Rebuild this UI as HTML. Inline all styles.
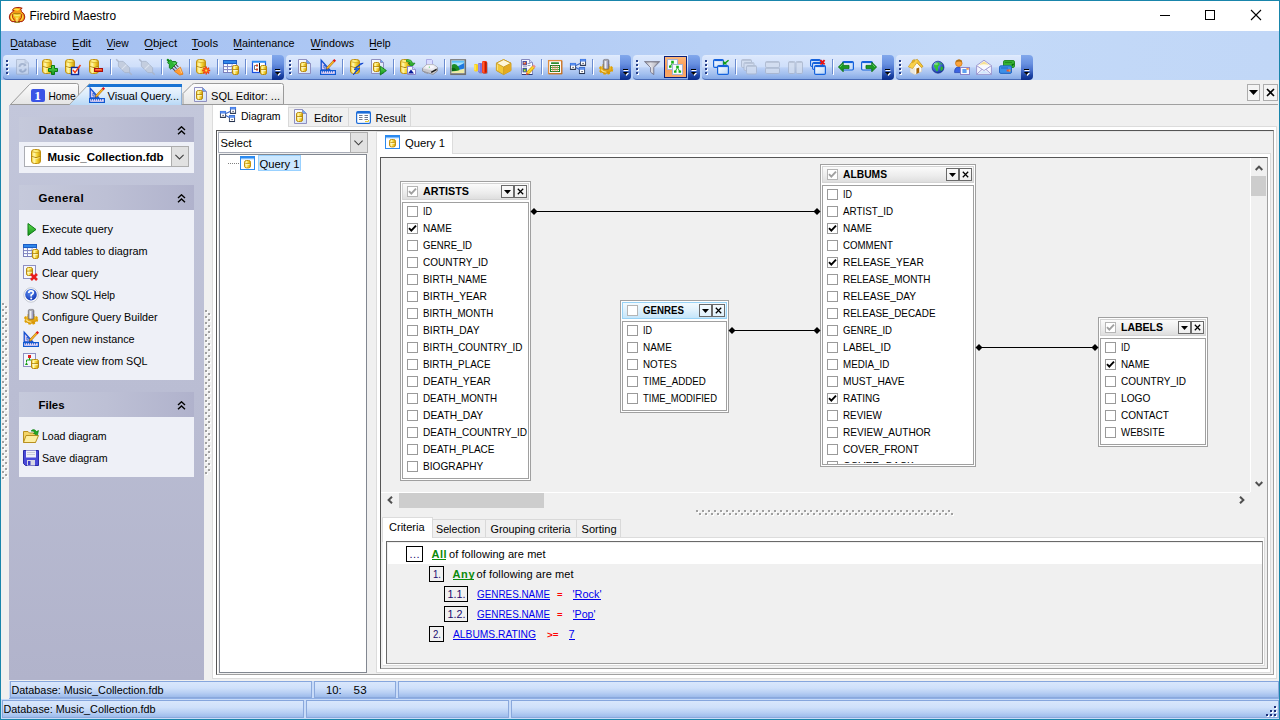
<!DOCTYPE html>
<html><head><meta charset="utf-8"><title>Firebird Maestro</title>
<style>
html,body{margin:0;padding:0;background:#f0f0f0;overflow:hidden}
#w{position:relative;width:1280px;height:720px;overflow:hidden;font-family:"Liberation Sans",sans-serif}
#w div,#w svg{position:absolute}
#tx{left:0;top:0;font-family:"Liberation Sans",sans-serif;font-size:11px}
#tx .t{font-family:"Liberation Sans",sans-serif}
</style></head><body>
<div id="w">
<svg width="0" height="0" style="left:0;top:0"><defs>
<linearGradient id="gcy" x1="0" y1="0" x2="1" y2="0"><stop offset="0" stop-color="#f3c81c"/><stop offset="0.28" stop-color="#fff9b8"/><stop offset="0.6" stop-color="#f7d733"/><stop offset="1" stop-color="#c8960c"/></linearGradient>
<linearGradient id="gpg" x1="0" y1="0" x2="1" y2="1"><stop offset="0" stop-color="#ffffff"/><stop offset="1" stop-color="#cfe0f6"/></linearGradient>
<linearGradient id="ggr" x1="0" y1="0" x2="0" y2="1"><stop offset="0" stop-color="#5fdc4f"/><stop offset="1" stop-color="#12921a"/></linearGradient>
<linearGradient id="gwin" x1="0" y1="0" x2="1" y2="1"><stop offset="0" stop-color="#ffffff"/><stop offset="1" stop-color="#b7d4f7"/></linearGradient>
<linearGradient id="ggear" x1="0" y1="0" x2="0" y2="1"><stop offset="0" stop-color="#ffd23c"/><stop offset="1" stop-color="#d08a00"/></linearGradient>
<linearGradient id="gmet" x1="0" y1="0" x2="1" y2="0"><stop offset="0" stop-color="#8a8a92"/><stop offset="0.4" stop-color="#f0f0f6"/><stop offset="1" stop-color="#6e6e78"/></linearGradient>
<radialGradient id="gglobe" cx="0.35" cy="0.3" r="0.8"><stop offset="0" stop-color="#6fa8ff"/><stop offset="1" stop-color="#0a2a9a"/></radialGradient>
<radialGradient id="ghelp" cx="0.4" cy="0.3" r="0.8"><stop offset="0" stop-color="#5d8df0"/><stop offset="1" stop-color="#0a2fb0"/></radialGradient>
<symbol id="i_db_small" viewBox="0 0 16 16" overflow="visible"><rect x="1.5" y="0.5" width="9" height="14" rx="3" ry="2.4000000000000004" fill="url(#gcy)" stroke="#c09010" stroke-width="1"/><path d="M2 2.6Q6.0 4.85 10 2.6Q6.0 -0.6 2 2.6Z" fill="#fdee7c" opacity="0.9"/><path d="M1.8 2.6Q6.0 4.85 10.2 2.6" stroke="#c89a14" stroke-width="0.8" fill="none" opacity="0.8"/><path d="M1.6 7.5Q6.0 9.75 10.4 7.5" stroke="#a87c08" stroke-width="1" fill="none" opacity="0.9"/><path d="M2.2 8.5Q6.0 10.75 9.8 8.5" stroke="#fff6b0" stroke-width="0.8" fill="none" opacity="0.8"/></symbol><symbol id="i_db_add" viewBox="0 0 16 16" overflow="visible"><rect x="0.5" y="0.5" width="9" height="14" rx="3" ry="2.4000000000000004" fill="url(#gcy)" stroke="#c09010" stroke-width="1"/><path d="M1 2.6Q5.0 4.85 9 2.6Q5.0 -0.6 1 2.6Z" fill="#fdee7c" opacity="0.9"/><path d="M0.8 2.6Q5.0 4.85 9.2 2.6" stroke="#c89a14" stroke-width="0.8" fill="none" opacity="0.8"/><path d="M0.6 7.5Q5.0 9.75 9.4 7.5" stroke="#a87c08" stroke-width="1" fill="none" opacity="0.9"/><path d="M1.2 8.5Q5.0 10.75 8.8 8.5" stroke="#fff6b0" stroke-width="0.8" fill="none" opacity="0.8"/><path d="M9.5 6.5h3v3h3v3h-3v3h-3v-3h-3v-3h3z" fill="url(#ggr)" stroke="#0c7a12" stroke-width="1"/></symbol><symbol id="i_db_check" viewBox="0 0 16 16" overflow="visible"><rect x="0.5" y="0.5" width="9" height="14" rx="3" ry="2.4000000000000004" fill="url(#gcy)" stroke="#c09010" stroke-width="1"/><path d="M1 2.6Q5.0 4.85 9 2.6Q5.0 -0.6 1 2.6Z" fill="#fdee7c" opacity="0.9"/><path d="M0.8 2.6Q5.0 4.85 9.2 2.6" stroke="#c89a14" stroke-width="0.8" fill="none" opacity="0.8"/><path d="M0.6 7.5Q5.0 9.75 9.4 7.5" stroke="#a87c08" stroke-width="1" fill="none" opacity="0.9"/><path d="M1.2 8.5Q5.0 10.75 8.8 8.5" stroke="#fff6b0" stroke-width="0.8" fill="none" opacity="0.8"/><rect x="6.5" y="8.5" width="7" height="7" fill="#fff" stroke="#0b2c9c" stroke-width="1.4"/><path d="M8 11L10 13.6L15.5 6" stroke="#f03a14" stroke-width="1.5" fill="none"/></symbol><symbol id="i_db_del" viewBox="0 0 16 16" overflow="visible"><rect x="0.5" y="0.5" width="9" height="14" rx="3" ry="2.4000000000000004" fill="url(#gcy)" stroke="#c09010" stroke-width="1"/><path d="M1 2.6Q5.0 4.85 9 2.6Q5.0 -0.6 1 2.6Z" fill="#fdee7c" opacity="0.9"/><path d="M0.8 2.6Q5.0 4.85 9.2 2.6" stroke="#c89a14" stroke-width="0.8" fill="none" opacity="0.8"/><path d="M0.6 7.5Q5.0 9.75 9.4 7.5" stroke="#a87c08" stroke-width="1" fill="none" opacity="0.9"/><path d="M1.2 8.5Q5.0 10.75 8.8 8.5" stroke="#fff6b0" stroke-width="0.8" fill="none" opacity="0.8"/><rect x="5.5" y="9.5" width="8" height="3" fill="#f2481c" stroke="#a80c0c" stroke-width="1"/><path d="M6.5 10.5H12.5" stroke="#ff8a50" stroke-width="0.8"/></symbol><symbol id="i_db_gear" viewBox="0 0 16 16" overflow="visible"><rect x="0.5" y="0.5" width="9" height="14" rx="3" ry="2.4000000000000004" fill="url(#gcy)" stroke="#c09010" stroke-width="1"/><path d="M1 2.6Q5.0 4.85 9 2.6Q5.0 -0.6 1 2.6Z" fill="#fdee7c" opacity="0.9"/><path d="M0.8 2.6Q5.0 4.85 9.2 2.6" stroke="#c89a14" stroke-width="0.8" fill="none" opacity="0.8"/><path d="M0.6 7.5Q5.0 9.75 9.4 7.5" stroke="#a87c08" stroke-width="1" fill="none" opacity="0.9"/><path d="M1.2 8.5Q5.0 10.75 8.8 8.5" stroke="#fff6b0" stroke-width="0.8" fill="none" opacity="0.8"/><g transform="translate(10.2 11.6)"><path d="M0 -4V4M-4 0H4M-2.8 -2.8L2.8 2.8M-2.8 2.8L2.8 -2.8" stroke="#f43a0c" stroke-width="1.5"/><circle r="2.5" fill="#f85818"/><circle r="1.1" fill="#ffe24a"/></g></symbol><symbol id="i_db_bolt" viewBox="0 0 16 16" overflow="visible"><rect x="2.5" y="0.5" width="9" height="14" rx="3" ry="2.4000000000000004" fill="url(#gcy)" stroke="#c09010" stroke-width="1"/><path d="M3 2.6Q7.0 4.85 11 2.6Q7.0 -0.6 3 2.6Z" fill="#fdee7c" opacity="0.9"/><path d="M2.8 2.6Q7.0 4.85 11.2 2.6" stroke="#c89a14" stroke-width="0.8" fill="none" opacity="0.8"/><path d="M2.6 7.5Q7.0 9.75 11.4 7.5" stroke="#a87c08" stroke-width="1" fill="none" opacity="0.9"/><path d="M3.2 8.5Q7.0 10.75 10.8 8.5" stroke="#fff6b0" stroke-width="0.8" fill="none" opacity="0.8"/><path d="M15.2 4.2L7.6 8.6L11.6 9.4L5.2 16L8.6 10.8L6 10.4L12.6 4.6Z" fill="#2a78f4" stroke="#0a3cc8" stroke-width="0.8" stroke-linejoin="round"/></symbol><symbol id="i_db_export" viewBox="0 0 16 16" overflow="visible"><rect x="0.5" y="0.5" width="9" height="14" rx="3" ry="2.4000000000000004" fill="url(#gcy)" stroke="#c09010" stroke-width="1"/><path d="M1 2.6Q5.0 4.85 9 2.6Q5.0 -0.6 1 2.6Z" fill="#fdee7c" opacity="0.9"/><path d="M0.8 2.6Q5.0 4.85 9.2 2.6" stroke="#c89a14" stroke-width="0.8" fill="none" opacity="0.8"/><path d="M0.6 7.5Q5.0 9.75 9.4 7.5" stroke="#a87c08" stroke-width="1" fill="none" opacity="0.9"/><path d="M1.2 8.5Q5.0 10.75 8.8 8.5" stroke="#fff6b0" stroke-width="0.8" fill="none" opacity="0.8"/><path d="M6.5 0.8Q12 0.2 12.4 4.2H15L11.6 8L8.2 4.2H10.4Q10 2.6 6.5 2.6Z" fill="url(#ggr)" stroke="#0c7a12" stroke-width="0.7"/><path d="M7.5 7.5H12.5L15.5 10.5V15.5H7.5Z" fill="#f6f8ff" stroke="#8a84c8"/><path d="M12.5 7.5V10.5H15.5" fill="#cfe0ff" stroke="#8a84c8" stroke-width="0.8"/><path d="M11 10.6L14 14.4H8Z" fill="#0a1c9c"/></symbol><symbol id="i_tb_refresh" viewBox="0 0 16 16" overflow="visible"><g opacity="0.62"><path d="M2.5 0.5H11L14.5 4V15.2H2.5Z" fill="#d0daea" stroke="#9eacc4"/><path d="M11 0.5V4H14.5" fill="#bcc8dc" stroke="#9eacc4" stroke-width="0.8"/><path d="M5.4 8A3.4 3.4 0 0 1 11.6 6.4M11.8 9.6A3.4 3.4 0 0 1 5.6 11.2" stroke="#8c9cb8" stroke-width="1.9" fill="none"/><path d="M10 4.4L12.6 6.8L9.4 7.6ZM7.2 13.2L4.6 10.8L7.8 10Z" fill="#8c9cb8"/></g></symbol><symbol id="i_conn_gray" viewBox="0 0 16 16" overflow="visible"><g transform="rotate(45 8 8)" opacity="0.9"><rect x="-3" y="7.3" width="22" height="1.5" fill="#a9b4c9"/><path d="M1 7L3.5 4.6H12.5L15 7V9L12.5 11.4H3.5L1 9Z" fill="#c3ccdc" stroke="#a7b2c8" stroke-width="0.8"/><path d="M8 4.6V11.4" stroke="#dfe5ef" stroke-width="1"/></g></symbol><symbol id="i_plug" viewBox="0 0 16 16" overflow="visible"><g transform="rotate(45 8 8)"><rect x="-3.2" y="7" width="3.4" height="2.2" rx="1" fill="#0f8a18"/><path d="M-0.3 6L2.2 6L4.6 3.6H6.6V12.6H4.6L2.2 10.2H-0.3Z" fill="#2cb534" stroke="#0a7412" stroke-width="0.8"/><path d="M3 6.5L5 4.6H6V6.5Z" fill="#7ee07e" opacity="0.7"/><path d="M6.8 5.6H10.4M6.8 8.1H10.4M6.8 10.6H10.4" stroke="#4a3c3c" stroke-width="1"/></g><path d="M7.6 12.4L13.4 8.2L16 15.2L12.8 16Z" fill="#ff9c34" stroke="#e87a0c" stroke-width="0.8"/><path d="M11.5 10.5L13 9.6L14.6 14" stroke="#ffd090" stroke-width="0.9" fill="none"/></symbol><symbol id="i_table_db" viewBox="0 0 16 16" overflow="visible"><rect x="0.5" y="1.5" width="13" height="12" fill="#fff" stroke="#7c80bc"/><rect x="0.5" y="1.5" width="13" height="3" fill="#2f86ea" stroke="#1c5cc4"/><path d="M1 7.5H13M1 10.5H13M4.5 5V13M9 5V13" stroke="#8a8cc4" stroke-width="1"/><path d="M1.5 5.5H4M5.5 5.5H8.5M1.5 8.5H4M5.5 8.5H8.5M1.5 11.5H4M5.5 11.5H8.5" stroke="#e4f0ff" stroke-width="1.2"/><rect x="9.5" y="6.5" width="6" height="9" rx="2" ry="1.6" fill="url(#gcy)" stroke="#b8880c" stroke-width="1"/><path d="M10.6 7.5H14.4" stroke="#fdf08c" stroke-width="0.9" opacity="0.9"/><path d="M10 10.7H15" stroke="#a87c08" stroke-width="0.9"/><path d="M10.2 11.7H14.8" stroke="#fffad8" stroke-width="1"/></symbol><symbol id="i_diag_db" viewBox="0 0 16 16" overflow="visible"><rect x="0.5" y="2.5" width="13" height="11" fill="#fff" stroke="#1c50e0" stroke-width="1.2"/><path d="M0 2.8H14" stroke="#2b8cf4" stroke-width="1.8"/><path d="M7.5 4V13" stroke="#111" stroke-width="1"/><path d="M4.5 6.5H2.5V10.5H4.5" stroke="#666" stroke-width="0.9" fill="none"/><rect x="4" y="5.5" width="2" height="2" fill="#d8401c"/><rect x="4" y="9.5" width="2" height="2" fill="#d8401c"/><rect x="8.5" y="6.5" width="6" height="9" rx="2" ry="1.6" fill="url(#gcy)" stroke="#b8880c" stroke-width="1"/><path d="M9.6 7.5H13.4" stroke="#fdf08c" stroke-width="0.9" opacity="0.9"/><path d="M9 10.7H14" stroke="#a87c08" stroke-width="0.9"/><path d="M9.2 11.7H13.8" stroke="#fffad8" stroke-width="1"/></symbol><symbol id="i_view_db" viewBox="0 0 16 16" overflow="visible"><rect x="0.5" y="0.5" width="12" height="13" fill="#f4f6ff" stroke="#8f8fc0"/><rect x="5" y="2" width="3" height="3" fill="#e02020"/><path d="M6.5 5V7M3.5 9V7H9.5V9" stroke="#18a018" stroke-width="1" fill="none"/><path d="M2 12L3.5 9L5 12Z" fill="#18a018"/><rect x="8.5" y="6.5" width="7" height="9" rx="2" ry="1.6" fill="url(#gcy)" stroke="#b8880c" stroke-width="1"/><path d="M9.6 7.5H14.4" stroke="#fdf08c" stroke-width="0.9" opacity="0.9"/><path d="M9 10.7H15" stroke="#a87c08" stroke-width="0.9"/><path d="M9.2 11.7H14.8" stroke="#fffad8" stroke-width="1"/></symbol><symbol id="i_clear_q" viewBox="0 0 16 16" overflow="visible"><rect x="0.5" y="0.5" width="12" height="13" fill="#f4f6ff" stroke="#8f8fc0"/><rect x="3.5" y="2.5" width="6" height="8" rx="2" ry="1.6" fill="url(#gcy)" stroke="#b8880c" stroke-width="1"/><path d="M4.6 3.5H8.4" stroke="#fdf08c" stroke-width="0.9" opacity="0.9"/><path d="M4 6.2H9" stroke="#a87c08" stroke-width="0.9"/><path d="M4.2 7.2H8.8" stroke="#fffad8" stroke-width="1"/><path d="M8 9L14 15M14 9L8 15" stroke="#e81c1c" stroke-width="2.6"/></symbol><symbol id="i_sqldoc" viewBox="0 0 16 16" overflow="visible"><path d="M1.5 0.5H9.5L13.5 4.5V14.5H1.5Z" fill="url(#gpg)" stroke="#8f8fc0" stroke-width="1"/><path d="M9.5 0.5V4.5H13.5" fill="#6aa8f2" stroke="#8f8fc0" stroke-width="1"/><rect x="3.5" y="3.5" width="6" height="9" rx="2" ry="1.6" fill="url(#gcy)" stroke="#b8880c" stroke-width="1"/><path d="M4.6 4.5H8.4" stroke="#fdf08c" stroke-width="0.9" opacity="0.9"/><path d="M4 7.7H9" stroke="#a87c08" stroke-width="0.9"/><path d="M4.2 8.7H8.8" stroke="#fffad8" stroke-width="1"/></symbol><symbol id="i_doc_play" viewBox="0 0 16 16" overflow="visible"><path d="M0.5 0.5H9.5L12.5 3.5V14.5H0.5Z" fill="url(#gpg)" stroke="#8f8fc0" stroke-width="1"/><path d="M9.5 0.5V3.5H12.5" fill="#6aa8f2" stroke="#8f8fc0" stroke-width="1"/><rect x="2.5" y="3.5" width="6" height="9" rx="2" ry="1.6" fill="url(#gcy)" stroke="#b8880c" stroke-width="1"/><path d="M3.6 4.5H7.4" stroke="#fdf08c" stroke-width="0.9" opacity="0.9"/><path d="M3 7.7H8" stroke="#a87c08" stroke-width="0.9"/><path d="M3.2 8.7H7.8" stroke="#fffad8" stroke-width="1"/><path d="M9.3 7.2L15.4 11.6L9.3 16Z" fill="url(#ggr)" stroke="#0c7a12" stroke-width="0.9"/></symbol><symbol id="i_ruler" viewBox="0 0 16 16" overflow="visible"><path d="M1.2 11V1.2L10 11Z" fill="#d8c8f0" stroke="#1450d0" stroke-width="1.3"/><path d="M4 9V6L6.8 9Z" fill="#e8f0ff" stroke="#1a50c8" stroke-width="0.8"/><rect x="0.6" y="11.6" width="14.8" height="3.8" fill="#ecd8f4" stroke="#1058d0" stroke-width="1.2"/><path d="M2.5 12V13.6M4.5 12V13.6M6.5 12V13.6M8.5 12V13.6M10.5 12V13.6M12.5 12V13.6" stroke="#1058d0" stroke-width="0.8"/><path d="M7 9.5L14 2" stroke="#a86410" stroke-width="2.4"/><path d="M7 9.5L14 2" stroke="#f8b828" stroke-width="1.4"/><path d="M13.6 2.4L15.2 0.8" stroke="#e01818" stroke-width="2.4"/><path d="M6 10.8L6.6 9L7.8 10.2Z" fill="#333"/></symbol><symbol id="i_printer" viewBox="0 0 16 16" overflow="visible"><path d="M4.5 0.5H9.5L10.5 1.5V6H4.5Z" fill="#d9dcff" stroke="#a4a4e0" stroke-width="0.9"/><path d="M0.6 9.2L5 5.6H11.4L15.4 8.4V12L11 15.4L0.6 12.2Z" fill="#c9c9cd" stroke="#85858c" stroke-width="0.8"/><path d="M0.6 9.2L5 5.6H11.4L15.4 8.4L10.6 11.6Z" fill="#e9e9ee"/><path d="M5 6.4H10.6L12.6 8L9.6 9.8L3 8Z" fill="#fafaff" opacity="0.8"/><path d="M9.2 13.4L14.6 10.4" stroke="#1a1a1a" stroke-width="1.5"/><circle cx="7.3" cy="8.1" r="0.6" fill="#30c040"/><path d="M2 12.6L6 13.8V15L2 13.8Z" fill="#9a9aa2"/></symbol><symbol id="i_picture" viewBox="0 0 16 16" overflow="visible"><rect x="0.6" y="0.6" width="15" height="15" fill="#b4b4b4" stroke="#7c7c7c" stroke-width="1"/><path d="M15.2 1V15.2H1" stroke="#6a6a6a" stroke-width="1.2" fill="none"/><rect x="1.8" y="1.8" width="12.4" height="12.2" fill="#a8e4fc"/><path d="M1.8 1.8H14.2V3.6H1.8Z" fill="#5cc0f8"/><path d="M7.5 7.5L14.2 4V10.5H7.5Z" fill="#1e78e0"/><path d="M1.8 6Q5 3.6 8.2 7.4Q10.4 10.6 9 12.4L1.8 12.6Z" fill="#1c8c24"/><path d="M1.8 9Q4.5 8 6.5 11L1.8 12.6Z" fill="#0c6414"/><path d="M1.8 12.4Q7 12.4 14.2 9.4V14H1.8Z" fill="#f0eca4"/></symbol><symbol id="i_chart" viewBox="0 0 16 16" overflow="visible"><rect x="9.8" y="3" width="5" height="12" rx="1.4" fill="#303040" opacity="0.35"/><rect x="6" y="5.2" width="4" height="9.2" rx="1.2" fill="#303040" opacity="0.3"/><rect x="1" y="5" width="4" height="7.4" rx="1.3" fill="#fad21c"/><path d="M2 6V11.4" stroke="#fff48c" stroke-width="1"/><rect x="5" y="4" width="4.2" height="9.6" rx="1.3" fill="#7c74dc"/><path d="M6.1 5V12.6" stroke="#b0aaf0" stroke-width="1"/><rect x="9" y="2" width="5" height="12.4" rx="1.4" fill="#f8340c"/><path d="M12.8 3V13.4" stroke="#b01c04" stroke-width="1.4"/><path d="M10.2 3V13.4" stroke="#ff7a50" stroke-width="0.9"/></symbol><symbol id="i_cube" viewBox="0 0 16 16" overflow="visible"><path d="M7.6 0.6L15 4.2V11.6L7.6 15.6L0.4 11.6V4.2Z" fill="#f2c838" stroke="#c4961c" stroke-width="0.9"/><path d="M7.6 8L15 4.2V11.6L7.6 15.6Z" fill="#e4aa20"/><path d="M7.6 0.6L15 4.2L7.6 8L0.4 4.2Z" fill="#fef6d8" stroke="#c89c20" stroke-width="0.9"/><path d="M7.6 8V15.6" stroke="#c89c20" stroke-width="0.8"/><path d="M1.4 5.6V11.2" stroke="#fbe27c" stroke-width="1"/></symbol><symbol id="i_report" viewBox="0 0 16 16" overflow="visible"><path d="M1.5 0.5H9.5L12.5 3.5V15.5H1.5Z" fill="#f6f8ff" stroke="#8488c0"/><path d="M9.5 0.5V3.5H12.5" fill="#cfdcf8" stroke="#8488c0" stroke-width="0.8"/><path d="M2 15.5H12.5" stroke="#2a3a78" stroke-width="1"/><rect x="3" y="2.5" width="3.4" height="3.4" fill="#e8602c" stroke="#2c3c9c" stroke-width="0.8"/><rect x="3" y="9.5" width="3.4" height="3.4" fill="#4cac3c" stroke="#2c3c9c" stroke-width="0.8"/><path d="M3.6 3.1H5L4.3 4.4Z" fill="#9cd0ff"/><path d="M3.6 12.2L4.8 10.4L5.8 12.2Z" fill="#f4e040"/><path d="M7.6 4.5H10.4M7.6 6.5H10.4M3 7.8H7" stroke="#8a90b0" stroke-width="0.9"/><path d="M7.4 14.2L13.8 7.6" stroke="#c89008" stroke-width="3.4" stroke-linecap="butt"/><path d="M7.4 14.2L13.8 7.6" stroke="#fad428" stroke-width="2.2"/><path d="M5.8 16L6.6 13.2L8.6 15.2Z" fill="#f0502c"/><path d="M13.4 8L14.8 6.6" stroke="#f08c8c" stroke-width="2.8"/></symbol><symbol id="i_gridcal" viewBox="0 0 16 16" overflow="visible"><rect x="1.6" y="1.6" width="13" height="13" fill="#fff" stroke="#e08c3c" stroke-width="1.3"/><path d="M2 14.8H15M14.9 2V15" stroke="#b86820" stroke-width="0.8" fill="none"/><rect x="4" y="3.2" width="8" height="1.7" rx="0.5" fill="#2c8c2c"/><rect x="3.5" y="6.5" width="9" height="6" fill="#fff" stroke="#1c7c24" stroke-width="1"/><path d="M3.5 8.5H12.5M3.5 10.5H12.5" stroke="#2c9c34" stroke-width="0.9"/><path d="M5.8 6.5V12.5M8 6.5V12.5M10.2 6.5V12.5" stroke="#e88c50" stroke-width="0.9"/></symbol><symbol id="i_diagram" viewBox="0 0 16 16" overflow="visible"><path d="M5.8 6.6L10.2 4.4M5.8 8.6L9.4 10.4" stroke="#3c68c8" stroke-width="1.1" fill="none"/><rect x="0.4" y="4.4" width="5.2" height="6.0" fill="#fff" stroke="#2c3c60" stroke-width="0.9"/><rect x="0" y="4" width="6" height="2.5" fill="#3e7ae8"/><path d="M1 5.2H5" stroke="#7ca8f4" stroke-width="0.7"/><path d="M0.3 10.3H5.7" stroke="#26324c" stroke-width="1"/><path d="M2.2 8.4H4" stroke="#445" stroke-width="0.8"/><rect x="10.4" y="0.4" width="5.2" height="6.0" fill="#fff" stroke="#2c3c60" stroke-width="0.9"/><rect x="10" y="0" width="6" height="2.5" fill="#3e7ae8"/><path d="M11 1.2H15" stroke="#7ca8f4" stroke-width="0.7"/><path d="M10.3 6.3H15.7" stroke="#26324c" stroke-width="1"/><path d="M12.2 4.4H14" stroke="#445" stroke-width="0.8"/><rect x="9.4" y="8.6" width="5.2" height="6.0" fill="#fff" stroke="#2c3c60" stroke-width="0.9"/><rect x="9" y="8.2" width="6" height="2.5" fill="#3e7ae8"/><path d="M10 9.399999999999999H14" stroke="#7ca8f4" stroke-width="0.7"/><path d="M9.3 14.5H14.7" stroke="#26324c" stroke-width="1"/><path d="M11.2 12.6H13" stroke="#445" stroke-width="0.8"/></symbol><symbol id="i_gear" viewBox="0 0 16 16" overflow="visible"><ellipse cx="8" cy="10.3" rx="6.1" ry="4.4" fill="none" stroke="#e0a000" stroke-width="2.2" stroke-dasharray="2.3 1.9"/><ellipse cx="8" cy="10.3" rx="5.7" ry="4.1" fill="url(#ggear)" stroke="#d89a00" stroke-width="0.6"/><path d="M3.2 10.6Q5 13.4 8.4 13.2" stroke="#fff0a0" stroke-width="1.3" fill="none" opacity="0.8"/><ellipse cx="8" cy="9.4" rx="3.4" ry="1.5" fill="#b07000" opacity="0.55"/><rect x="5.3" y="0.4" width="5.6" height="9.6" rx="1.6" ry="1.4" fill="url(#gmet)" stroke="#70707a" stroke-width="0.7"/><path d="M6 1.5H10.2" stroke="#a8a8b0" stroke-width="1"/><path d="M9.3 2.5V9" stroke="#a0a0e0" stroke-width="1" opacity="0.7"/></symbol><symbol id="i_funnel" viewBox="0 0 16 16" overflow="visible"><path d="M0.5 2.6H15.7L9.8 8.6V15.6L6.6 13.2V8.6Z" fill="url(#gmet)" stroke="#6a6a80" stroke-width="0.8"/><path d="M1.2 3H15" stroke="#8c8c98" stroke-width="1"/><path d="M2.6 3.8H13.4L8.4 8.2Z" fill="#d4d4dc" opacity="0.6"/></symbol><symbol id="i_viewpair" viewBox="0 0 16 16" overflow="visible"><rect x="1.5" y="0.5" width="10" height="10" fill="#f8faff" stroke="#a8b4d4" stroke-width="1"/><path d="M6.5 3.4L4.2 7.6M6.5 3.4L8.8 7.6" stroke="#12a012" stroke-width="0.9"/><path d="M5.2 1.8h2.6v2.2h-2.6zM3 6.6h2.5v2.2h-2.5zM7.6 6.6h2.5v2.2h-2.5z" fill="#14b014"/><rect x="6.5" y="5.5" width="10" height="10" fill="#f8faff" stroke="#a8b4d4" stroke-width="1"/><path d="M11.5 8.4L9.2 12.6M11.5 8.4L13.8 12.6" stroke="#12a012" stroke-width="0.9"/><path d="M10.2 6.8h2.6v2.2h-2.6zM8 11.6h2.5v2.2h-2.5zM12.6 11.6h2.5v2.2h-2.5z" fill="#14b014"/></symbol><symbol id="i_win_new" viewBox="0 0 16 16" overflow="visible"><rect x="0.6" y="0.6" width="9.8" height="7.8" rx="1.2" fill="url(#gwin)" stroke="#1462dc" stroke-width="1.2"/><path d="M1.2 1.4H9.8" stroke="#1462dc" stroke-width="1.4"/><rect x="4.6" y="6.6" width="10.8" height="8.8" rx="1.2" fill="url(#gwin)" stroke="#1462dc" stroke-width="1.2"/><path d="M5.2 7.4H14.8" stroke="#1462dc" stroke-width="1.4"/><path d="M15.6 1.2L11.4 4.6" stroke="#12a012" stroke-width="1.4"/><path d="M10.2 1.6V5.4H14.4Z" fill="#12a012"/></symbol><symbol id="i_cascade" viewBox="0 0 16 16" overflow="visible"><g opacity="0.8"><rect x="0.5" y="0.5" width="10" height="8" rx="1.3" fill="#d3ddee" stroke="#a9b5cb" stroke-width="1"/><path d="M1 1.3H10" stroke="#b4bfd2" stroke-width="1.4"/><rect x="3.0" y="3.5" width="10" height="8" rx="1.3" fill="#d3ddee" stroke="#a9b5cb" stroke-width="1"/><path d="M3.5 4.3H12.5" stroke="#b4bfd2" stroke-width="1.4"/><rect x="5.5" y="6.5" width="10" height="8.5" rx="1.3" fill="#d3ddee" stroke="#a9b5cb" stroke-width="1"/><path d="M6 7.3H15" stroke="#b4bfd2" stroke-width="1.4"/></g></symbol><symbol id="i_tileh" viewBox="0 0 16 16" overflow="visible"><g opacity="0.8"><rect x="1.5" y="2.5" width="14" height="6" rx="1.3" fill="#d3ddee" stroke="#a9b5cb" stroke-width="1"/><path d="M2 3.3H15" stroke="#b4bfd2" stroke-width="1.4"/><rect x="1.5" y="8.5" width="14" height="6" rx="1.3" fill="#d3ddee" stroke="#a9b5cb" stroke-width="1"/><path d="M2 9.3H15" stroke="#b4bfd2" stroke-width="1.4"/></g></symbol><symbol id="i_tilev" viewBox="0 0 16 16" overflow="visible"><g opacity="0.8"><rect x="1.5" y="2.5" width="6.5" height="12" rx="1.3" fill="#d3ddee" stroke="#a9b5cb" stroke-width="1"/><path d="M2 3.3H7.5" stroke="#b4bfd2" stroke-width="1.4"/><rect x="9.0" y="2.5" width="6.5" height="12" rx="1.3" fill="#d3ddee" stroke="#a9b5cb" stroke-width="1"/><path d="M9.5 3.3H15.0" stroke="#b4bfd2" stroke-width="1.4"/></g></symbol><symbol id="i_win_close" viewBox="0 0 16 16" overflow="visible"><rect x="0.6" y="0.6" width="9.8" height="6.8" rx="1.2" fill="url(#gwin)" stroke="#1462dc" stroke-width="1.2"/><path d="M1.2 1.4H9.8" stroke="#1462dc" stroke-width="1.4"/><rect x="2.6" y="3.6" width="9.8" height="6.8" rx="1.2" fill="url(#gwin)" stroke="#1462dc" stroke-width="1.2"/><path d="M3.2 4.4H11.8" stroke="#1462dc" stroke-width="1.4"/><rect x="4.6" y="6.6" width="10.8" height="8.8" rx="1.2" fill="url(#gwin)" stroke="#1462dc" stroke-width="1.2"/><path d="M5.2 7.4H14.8" stroke="#1462dc" stroke-width="1.4"/><path d="M10.4 1.2L14.6 5.4M14.6 1.2L10.4 5.4" stroke="#ec1010" stroke-width="1.9"/></symbol><symbol id="i_arr_back" viewBox="0 0 16 16" overflow="visible"><rect x="4.6" y="2.6" width="10.8" height="8.4" rx="1.2" fill="url(#gwin)" stroke="#1462dc" stroke-width="1.2"/><path d="M5.2 3.4H14.8" stroke="#1462dc" stroke-width="1.4"/><path d="M0.4 8L5.2 3.2V6.4H11V9.6H5.2V12.8Z" fill="#1a9a22" stroke="#0a6c10" stroke-width="0.8" stroke-linejoin="round"/><path d="M2 8L4.6 5.4" stroke="#6cd86c" stroke-width="0.8"/></symbol><symbol id="i_arr_fwd" viewBox="0 0 16 16" overflow="visible"><rect x="0.6" y="2.6" width="10.8" height="8.4" rx="1.2" fill="url(#gwin)" stroke="#1462dc" stroke-width="1.2"/><path d="M1.2 3.4H10.8" stroke="#1462dc" stroke-width="1.4"/><g transform="translate(16 0) scale(-1 1)"><path d="M0.4 8L5.2 3.2V6.4H11V9.6H5.2V12.8Z" fill="#1a9a22" stroke="#0a6c10" stroke-width="0.8" stroke-linejoin="round"/><path d="M2 8L4.6 5.4" stroke="#6cd86c" stroke-width="0.8"/></g></symbol><symbol id="i_home" viewBox="0 0 16 16" overflow="visible"><path d="M2.4 8.4V13L7 15.6L13.6 12.6V7.6L9 3.6Z" fill="#fbfaf4" stroke="#d0c8b4" stroke-width="0.7"/><path d="M7 15.6V9L2.4 8.4V13Z" fill="#ece8dc"/><path d="M0.4 7.8L4.6 2L9.4 0.4L15 7.4L13.4 8.6L8.8 3.6L4.6 9.4Z" fill="#f6c634" stroke="#c0901c" stroke-width="0.8"/><path d="M4.6 2L9.4 0.4L8.8 3.6L4.6 9.4L0.4 7.8Z" fill="#fbd858" opacity="0.6"/><path d="M8.4 9.6L11.2 8.4V13.6L8.4 14.9Z" fill="#a46408"/><path d="M4.4 1.4L6.4 0.4V2.6L4.4 3.8Z" fill="#e8b428" stroke="#c0901c" stroke-width="0.5"/></symbol><symbol id="i_globe" viewBox="0 0 16 16" overflow="visible"><circle cx="7" cy="8.2" r="6" fill="url(#gglobe)" stroke="#1c2c8c" stroke-width="0.7"/><path d="M3 5.4Q4.8 2.8 7.4 3.2Q9.6 4.2 8.2 6.4Q6.4 7.4 7 9.6Q7.6 11.4 6 12.6Q4.4 11.4 4.4 9.4Q2.6 7.8 3 5.4Z" fill="#34c434"/><path d="M9.8 7.6Q12 7 12.2 9Q11.8 11.6 9.8 12.2Q9 10 9.8 7.6Z" fill="#2cb42c"/><path d="M9 3.4Q10.8 3.8 11.6 5.2L10 5.4Z" fill="#34c434"/><ellipse cx="5" cy="5" rx="2" ry="1.2" fill="#fff" opacity="0.35"/></symbol><symbol id="i_person" viewBox="0 0 16 16" overflow="visible"><path d="M0.6 13Q0.4 8 5 8Q8.4 8 8.8 11V13.6H0.6Z" fill="#3c64e0" stroke="#1c3cb0" stroke-width="0.7"/><circle cx="4.8" cy="4.2" r="3.3" fill="#fca43c" stroke="#cc7414" stroke-width="0.7"/><path d="M1.6 3.4Q2.6 0 6 0.6Q8.4 1.2 8 3.6Q6 1.6 1.6 3.4Z" fill="#b07014"/><rect x="6.5" y="8.5" width="9" height="7" fill="#f8faff" stroke="#8c84c8" stroke-width="1"/><path d="M8.4 11H12.6M8.4 13H12.6" stroke="#2c84ec" stroke-width="1.3"/><rect x="12.4" y="9.2" width="2.4" height="1.4" fill="#f48424"/></symbol><symbol id="i_envelope" viewBox="0 0 16 16" overflow="visible"><path d="M0.6 6.6L8 1.2L15.4 6.6V15.4H0.6Z" fill="#f4f6ff" stroke="#9690cc" stroke-width="0.9"/><path d="M2.4 6.4L8 2.2L13.6 6.4L8 8.4Z" fill="#f6e094"/><path d="M2.4 6.4Q8 4 13.6 6.4L8 9Z" fill="#fffce8"/><path d="M0.6 6.6L8 11.6L15.4 6.6" stroke="#9690cc" stroke-width="0.9" fill="#f8faff"/><path d="M0.6 15.4L6 10.4M15.4 15.4L10 10.4" stroke="#9690cc" stroke-width="0.9"/><path d="M1.6 14.6H14.4L8 11.6Z" fill="#cfe4fc" opacity="0.9"/></symbol><symbol id="i_cards" viewBox="0 0 16 16" overflow="visible"><rect x="4.5" y="1.5" width="11" height="7" rx="1.4" fill="#34b034" stroke="#1c841c" stroke-width="0.9"/><path d="M6 3.4H13" stroke="#1c841c" stroke-width="0.9"/><path d="M16 4.4L13 7.6L12.6 5Z" fill="#0c6c10"/><rect x="0.5" y="6.8" width="12" height="7.6" rx="1.4" fill="#3c90e8" stroke="#1c60c0" stroke-width="0.9"/><path d="M2 9H9" stroke="#1c60c0" stroke-width="0.9"/><rect x="7.6" y="10.6" width="3.6" height="2" rx="0.6" fill="#f4542c"/><rect x="9.8" y="10.6" width="1.6" height="2" rx="0.6" fill="#f8a030"/></symbol><symbol id="i_home_one" viewBox="0 0 16 16" overflow="visible"><rect x="0" y="0" width="14" height="13" rx="2" fill="#3a54e6"/></symbol><symbol id="i_result" viewBox="0 0 16 16" overflow="visible"><rect x="0.6" y="0.6" width="13.8" height="11.8" rx="1.4" fill="#fff" stroke="#1c6cd8" stroke-width="1.2"/><path d="M1 1.6H14" stroke="#1c6cd8" stroke-width="2"/><path d="M3 4.5H6.5M8.5 4.5H12M3 6.5H6.5M8.5 6.5H12M3 8.5H6.5M8.5 8.5H12" stroke="#70788c" stroke-width="1"/><path d="M9 10.5H12.5V9" stroke="#e8c820" stroke-width="1" fill="none"/><path d="M2 11.4H13" stroke="#dbe8fa" stroke-width="1"/></symbol><symbol id="i_query" viewBox="0 0 16 16" overflow="visible"><rect x="0.5" y="0.5" width="14" height="13" fill="#fff" stroke="#2b8af0"/><path d="M0.5 1.6H14.5" stroke="#2b8af0" stroke-width="2.2"/><path d="M1 3H14" stroke="#a8d4fc" stroke-width="0.8"/><rect x="4.5" y="4.5" width="6" height="7.4" rx="2" ry="1.8" fill="url(#gcy)" stroke="#c09010"/><path d="M5.4 8.3H9.6" stroke="#fff8d0" stroke-width="1"/><path d="M5.4 7.5H9.6" stroke="#b88808" stroke-width="0.7"/></symbol><symbol id="i_play" viewBox="0 0 16 16" overflow="visible"><path d="M5 2.5L13 8.5L5 14.5Z" fill="url(#ggr)" stroke="#0c7a12" stroke-width="1"/></symbol><symbol id="i_help" viewBox="0 0 16 16" overflow="visible"><circle cx="8" cy="8" r="7.2" fill="#fff" stroke="#b8bcc8" stroke-width="0.8"/><circle cx="8" cy="7.7" r="5.8" fill="url(#ghelp)"/><path d="M5.8 6Q5.8 3.8 8 3.8Q10.3 3.8 10.3 5.8Q10.3 7 8.2 8V9.4" stroke="#fff" stroke-width="1.7" fill="none"/><circle cx="8.2" cy="11.4" r="1" fill="#fff"/></symbol><symbol id="i_folder" viewBox="0 0 16 16" overflow="visible"><path d="M0.5 3.5H5L6.5 5H12.5V14.5H0.5Z" fill="#f4d468" stroke="#b89020"/><path d="M0.5 14.5L3 7.5H15.5L12.5 14.5Z" fill="#fdeea0" stroke="#b89020"/><path d="M8 3Q11 0 13.5 3.5L15.5 2.5L14.5 7L10.5 5.5L12 4.5Q10.5 2.5 8 3Z" fill="#24a824" stroke="#0c7a12" stroke-width="0.6"/></symbol><symbol id="i_floppy" viewBox="0 0 16 16" overflow="visible"><path d="M0.5 0.5H15.5V15.5H2.5L0.5 13.5Z" fill="#4a4ad8" stroke="#2a2aa8"/><rect x="3" y="0.5" width="10" height="7" fill="#f0f0f8"/><path d="M4 2.5H12M4 4.5H12" stroke="#c0c0d0" stroke-width="0.8"/><rect x="4" y="10" width="8" height="5.5" fill="#d8d8e4"/><rect x="5" y="11" width="2.5" height="4" fill="#3a3ac8"/></symbol><symbol id="i_app" viewBox="0 0 16 16" overflow="visible"><path d="M3.4 3.2Q4.4 0.4 8 0.6L10.2 0.4L13.2 1.2L11.6 2.2Q12.6 3.4 12.4 4.6Q15.8 6.4 15.8 10Q15.6 13.4 13 14.6H3Q0.4 13.4 0.3 10Q0.4 6.6 3.4 5Q4.6 4.4 5 3.6Z" fill="#f49a18" stroke="#a41c0a" stroke-width="1"/><path d="M4.2 2.6Q5.4 1.2 7.6 1.6Q10 2.2 11 1.8Q10.4 3.4 8.6 3.8Q6 3.6 4.2 2.6Z" fill="#ffe83c"/><path d="M1.6 10Q1.6 7.2 3.8 6Q2.8 8.4 3.2 10.6Q3.6 12.6 5.2 13.8H3.8Q1.8 12.8 1.6 10Z" fill="#ffec58"/><path d="M14.4 10Q14.4 7.2 12.2 6Q13.2 8.4 12.8 10.6Q12.4 12.6 10.8 13.8H12.2Q14.2 12.8 14.4 10Z" fill="#ffd83c"/><path d="M3.2 7Q2.6 10.8 5.8 13.6M12.8 7Q13.4 10.8 10.2 13.6" stroke="#b02808" stroke-width="0.9" fill="none"/><path d="M4 6.6H12Q12.2 9.2 9.4 11L9 14.6H7L6.6 11Q3.8 9.2 4 6.6Z" fill="#f2d02c"/><path d="M4.2 6.7H11.8" stroke="#9c6c04" stroke-width="0.9"/><path d="M6.8 10.6Q8 11.4 9.2 10.6L9 14.6H7Z" fill="#fff48c"/><path d="M8 11.4V14" stroke="#f8b010" stroke-width="0.9"/><path d="M5.4 15.3H10.8" stroke="#847008" stroke-width="1"/><path d="M5 8Q8 9.2 11 8" stroke="#fff07c" stroke-width="0.9" fill="none"/></symbol></defs></svg>
<div style="left:0px;top:0px;width:1280px;height:720px;background:#f0f0f0"></div>
<div style="left:1px;top:1px;width:1278px;height:30px;background:#fff"></div>
<svg style="left:9px;top:7px;overflow:visible" width="16" height="16"><use href="#i_app"/></svg>
<div style="left:1160px;top:15px;width:10px;height:1px;background:#000"></div>
<div style="left:1205px;top:10px;width:10px;height:10px;border:1px solid #000;box-sizing:border-box"></div>
<svg style="left:1250px;top:9px" width="12" height="12" viewBox="0 0 12 12"><path d="M1 1L11 11M11 1L1 11" stroke="#000" stroke-width="1.1" fill="none"/></svg>
<div style="left:1px;top:31px;width:1278px;height:49px;background:linear-gradient(90deg,#a3bff1 0,#b4cdf5 45%,#c3d9f8 75%,#c1d7f7 100%)"></div>
<div style="left:11px;top:49px;width:7px;height:1px;background:#000"></div>
<div style="left:73px;top:49px;width:6px;height:1px;background:#000"></div>
<div style="left:107px;top:49px;width:7px;height:1px;background:#000"></div>
<div style="left:145px;top:49px;width:8px;height:1px;background:#000"></div>
<div style="left:192px;top:49px;width:6px;height:1px;background:#000"></div>
<div style="left:234px;top:49px;width:8px;height:1px;background:#000"></div>
<div style="left:311px;top:49px;width:10px;height:1px;background:#000"></div>
<div style="left:370px;top:49px;width:7px;height:1px;background:#000"></div>
<div style="left:3px;top:55px;width:272px;height:25px;background:linear-gradient(180deg,#e2ecfd 0,#dbe7fc 8%,#cfdffa 48%,#bcd1f6 54%,#a3c0ef 78%,#86a9e6 100%);border-radius:4px 0 0 4px;border-bottom:1px solid #4a6db8;box-sizing:border-box"></div>
<div style="left:272px;top:55px;width:12px;height:25px;background:linear-gradient(180deg,#82a8ec 0,#6890e0 35%,#4870cc 60%,#1c44a4 82%,#0a2c8a 100%);border-radius:0 4px 4px 0"></div>
<svg style="left:274px;top:69px" width="8" height="8" viewBox="0 0 8 8"><path d="M1.5 1.5H6.5" stroke="#fff" stroke-width="1"/><path d="M1 0.5H6" stroke="#000" stroke-width="1"/><path d="M2 4H7L4.5 7Z" fill="#fff"/><path d="M1 3H6L3.5 6Z" fill="#000"/></svg>
<div style="left:7px;top:61px;width:2px;height:2px;background:#fff"></div>
<div style="left:6px;top:60px;width:2px;height:2px;background:#27408b"></div>
<div style="left:7px;top:65px;width:2px;height:2px;background:#fff"></div>
<div style="left:6px;top:64px;width:2px;height:2px;background:#27408b"></div>
<div style="left:7px;top:69px;width:2px;height:2px;background:#fff"></div>
<div style="left:6px;top:68px;width:2px;height:2px;background:#27408b"></div>
<div style="left:7px;top:73px;width:2px;height:2px;background:#fff"></div>
<div style="left:6px;top:72px;width:2px;height:2px;background:#27408b"></div>
<svg style="left:14px;top:59px;overflow:visible" width="16" height="16"><use href="#i_tb_refresh"/></svg>
<div style="left:36px;top:59px;width:1px;height:15px;background:#6a8cd0"></div>
<div style="left:37px;top:60px;width:1px;height:15px;background:#fff"></div>
<svg style="left:42px;top:59px;overflow:visible" width="16" height="16"><use href="#i_db_add"/></svg>
<svg style="left:65px;top:59px;overflow:visible" width="16" height="16"><use href="#i_db_check"/></svg>
<svg style="left:89px;top:59px;overflow:visible" width="16" height="16"><use href="#i_db_del"/></svg>
<div style="left:110px;top:59px;width:1px;height:15px;background:#6a8cd0"></div>
<div style="left:111px;top:60px;width:1px;height:15px;background:#fff"></div>
<svg style="left:116px;top:59px;overflow:visible" width="16" height="16"><use href="#i_conn_gray"/></svg>
<svg style="left:139px;top:59px;overflow:visible" width="16" height="16"><use href="#i_conn_gray"/></svg>
<div style="left:161px;top:59px;width:1px;height:15px;background:#6a8cd0"></div>
<div style="left:162px;top:60px;width:1px;height:15px;background:#fff"></div>
<svg style="left:167px;top:59px;overflow:visible" width="16" height="16"><use href="#i_plug"/></svg>
<div style="left:189px;top:59px;width:1px;height:15px;background:#6a8cd0"></div>
<div style="left:190px;top:60px;width:1px;height:15px;background:#fff"></div>
<svg style="left:196px;top:59px;overflow:visible" width="16" height="16"><use href="#i_db_gear"/></svg>
<div style="left:217px;top:59px;width:1px;height:15px;background:#6a8cd0"></div>
<div style="left:218px;top:60px;width:1px;height:15px;background:#fff"></div>
<svg style="left:223px;top:59px;overflow:visible" width="16" height="16"><use href="#i_table_db"/></svg>
<div style="left:245px;top:59px;width:1px;height:15px;background:#6a8cd0"></div>
<div style="left:246px;top:60px;width:1px;height:15px;background:#fff"></div>
<svg style="left:252px;top:59px;overflow:visible" width="16" height="16"><use href="#i_diag_db"/></svg>
<div style="left:286px;top:55px;width:337px;height:25px;background:linear-gradient(180deg,#e2ecfd 0,#dbe7fc 8%,#cfdffa 48%,#bcd1f6 54%,#a3c0ef 78%,#86a9e6 100%);border-radius:4px 0 0 4px;border-bottom:1px solid #4a6db8;box-sizing:border-box"></div>
<div style="left:620px;top:55px;width:11px;height:25px;background:linear-gradient(180deg,#82a8ec 0,#6890e0 35%,#4870cc 60%,#1c44a4 82%,#0a2c8a 100%);border-radius:0 4px 4px 0"></div>
<svg style="left:622px;top:69px" width="8" height="8" viewBox="0 0 8 8"><path d="M1.5 1.5H6.5" stroke="#fff" stroke-width="1"/><path d="M1 0.5H6" stroke="#000" stroke-width="1"/><path d="M2 4H7L4.5 7Z" fill="#fff"/><path d="M1 3H6L3.5 6Z" fill="#000"/></svg>
<div style="left:290px;top:61px;width:2px;height:2px;background:#fff"></div>
<div style="left:289px;top:60px;width:2px;height:2px;background:#27408b"></div>
<div style="left:290px;top:65px;width:2px;height:2px;background:#fff"></div>
<div style="left:289px;top:64px;width:2px;height:2px;background:#27408b"></div>
<div style="left:290px;top:69px;width:2px;height:2px;background:#fff"></div>
<div style="left:289px;top:68px;width:2px;height:2px;background:#27408b"></div>
<div style="left:290px;top:73px;width:2px;height:2px;background:#fff"></div>
<div style="left:289px;top:72px;width:2px;height:2px;background:#27408b"></div>
<svg style="left:297px;top:59px;overflow:visible" width="16" height="16"><use href="#i_sqldoc"/></svg>
<svg style="left:320px;top:59px;overflow:visible" width="16" height="16"><use href="#i_ruler"/></svg>
<div style="left:342px;top:59px;width:1px;height:15px;background:#6a8cd0"></div>
<div style="left:343px;top:60px;width:1px;height:15px;background:#fff"></div>
<svg style="left:348px;top:59px;overflow:visible" width="16" height="16"><use href="#i_db_bolt"/></svg>
<svg style="left:371px;top:59px;overflow:visible" width="16" height="16"><use href="#i_doc_play"/></svg>
<div style="left:393px;top:59px;width:1px;height:15px;background:#6a8cd0"></div>
<div style="left:394px;top:60px;width:1px;height:15px;background:#fff"></div>
<svg style="left:400px;top:59px;overflow:visible" width="16" height="16"><use href="#i_db_export"/></svg>
<svg style="left:422px;top:59px;overflow:visible" width="16" height="16"><use href="#i_printer"/></svg>
<div style="left:444px;top:59px;width:1px;height:15px;background:#6a8cd0"></div>
<div style="left:445px;top:60px;width:1px;height:15px;background:#fff"></div>
<svg style="left:450px;top:59px;overflow:visible" width="16" height="16"><use href="#i_picture"/></svg>
<svg style="left:473px;top:59px;overflow:visible" width="16" height="16"><use href="#i_chart"/></svg>
<svg style="left:496px;top:59px;overflow:visible" width="16" height="16"><use href="#i_cube"/></svg>
<svg style="left:520px;top:59px;overflow:visible" width="16" height="16"><use href="#i_report"/></svg>
<div style="left:541px;top:59px;width:1px;height:15px;background:#6a8cd0"></div>
<div style="left:542px;top:60px;width:1px;height:15px;background:#fff"></div>
<svg style="left:547px;top:59px;overflow:visible" width="16" height="16"><use href="#i_gridcal"/></svg>
<svg style="left:570px;top:59px;overflow:visible" width="16" height="16"><use href="#i_diagram"/></svg>
<div style="left:592px;top:59px;width:1px;height:15px;background:#6a8cd0"></div>
<div style="left:593px;top:60px;width:1px;height:15px;background:#fff"></div>
<svg style="left:598px;top:59px;overflow:visible" width="16" height="16"><use href="#i_gear"/></svg>
<div style="left:633px;top:55px;width:58px;height:25px;background:linear-gradient(180deg,#e2ecfd 0,#dbe7fc 8%,#cfdffa 48%,#bcd1f6 54%,#a3c0ef 78%,#86a9e6 100%);border-radius:4px 0 0 4px;border-bottom:1px solid #4a6db8;box-sizing:border-box"></div>
<div style="left:688px;top:55px;width:12px;height:25px;background:linear-gradient(180deg,#82a8ec 0,#6890e0 35%,#4870cc 60%,#1c44a4 82%,#0a2c8a 100%);border-radius:0 4px 4px 0"></div>
<svg style="left:690px;top:69px" width="8" height="8" viewBox="0 0 8 8"><path d="M1.5 1.5H6.5" stroke="#fff" stroke-width="1"/><path d="M1 0.5H6" stroke="#000" stroke-width="1"/><path d="M2 4H7L4.5 7Z" fill="#fff"/><path d="M1 3H6L3.5 6Z" fill="#000"/></svg>
<div style="left:637px;top:61px;width:2px;height:2px;background:#fff"></div>
<div style="left:636px;top:60px;width:2px;height:2px;background:#27408b"></div>
<div style="left:637px;top:65px;width:2px;height:2px;background:#fff"></div>
<div style="left:636px;top:64px;width:2px;height:2px;background:#27408b"></div>
<div style="left:637px;top:69px;width:2px;height:2px;background:#fff"></div>
<div style="left:636px;top:68px;width:2px;height:2px;background:#27408b"></div>
<div style="left:637px;top:73px;width:2px;height:2px;background:#fff"></div>
<div style="left:636px;top:72px;width:2px;height:2px;background:#27408b"></div>
<svg style="left:644px;top:59px;overflow:visible" width="16" height="16"><use href="#i_funnel"/></svg>
<div style="left:664px;top:56px;width:23px;height:22px;background:linear-gradient(180deg,#fdb77a 0,#fb9c55 50%,#f9a868 100%);border:1px solid #0a1f7a;box-sizing:border-box"></div>
<svg style="left:666px;top:59px;overflow:visible" width="16" height="16"><use href="#i_viewpair"/></svg>
<div style="left:702px;top:55px;width:183px;height:25px;background:linear-gradient(180deg,#e2ecfd 0,#dbe7fc 8%,#cfdffa 48%,#bcd1f6 54%,#a3c0ef 78%,#86a9e6 100%);border-radius:4px 0 0 4px;border-bottom:1px solid #4a6db8;box-sizing:border-box"></div>
<div style="left:882px;top:55px;width:12px;height:25px;background:linear-gradient(180deg,#82a8ec 0,#6890e0 35%,#4870cc 60%,#1c44a4 82%,#0a2c8a 100%);border-radius:0 4px 4px 0"></div>
<svg style="left:884px;top:69px" width="8" height="8" viewBox="0 0 8 8"><path d="M1.5 1.5H6.5" stroke="#fff" stroke-width="1"/><path d="M1 0.5H6" stroke="#000" stroke-width="1"/><path d="M2 4H7L4.5 7Z" fill="#fff"/><path d="M1 3H6L3.5 6Z" fill="#000"/></svg>
<div style="left:706px;top:61px;width:2px;height:2px;background:#fff"></div>
<div style="left:705px;top:60px;width:2px;height:2px;background:#27408b"></div>
<div style="left:706px;top:65px;width:2px;height:2px;background:#fff"></div>
<div style="left:705px;top:64px;width:2px;height:2px;background:#27408b"></div>
<div style="left:706px;top:69px;width:2px;height:2px;background:#fff"></div>
<div style="left:705px;top:68px;width:2px;height:2px;background:#27408b"></div>
<div style="left:706px;top:73px;width:2px;height:2px;background:#fff"></div>
<div style="left:705px;top:72px;width:2px;height:2px;background:#27408b"></div>
<svg style="left:713px;top:59px;overflow:visible" width="16" height="16"><use href="#i_win_new"/></svg>
<div style="left:735px;top:59px;width:1px;height:15px;background:#6a8cd0"></div>
<div style="left:736px;top:60px;width:1px;height:15px;background:#fff"></div>
<svg style="left:741px;top:59px;overflow:visible" width="16" height="16"><use href="#i_cascade"/></svg>
<svg style="left:764px;top:59px;overflow:visible" width="16" height="16"><use href="#i_tileh"/></svg>
<svg style="left:787px;top:59px;overflow:visible" width="16" height="16"><use href="#i_tilev"/></svg>
<svg style="left:810px;top:59px;overflow:visible" width="16" height="16"><use href="#i_win_close"/></svg>
<div style="left:832px;top:59px;width:1px;height:15px;background:#6a8cd0"></div>
<div style="left:833px;top:60px;width:1px;height:15px;background:#fff"></div>
<svg style="left:838px;top:59px;overflow:visible" width="16" height="16"><use href="#i_arr_back"/></svg>
<svg style="left:861px;top:59px;overflow:visible" width="16" height="16"><use href="#i_arr_fwd"/></svg>
<div style="left:896px;top:55px;width:128px;height:25px;background:linear-gradient(180deg,#e2ecfd 0,#dbe7fc 8%,#cfdffa 48%,#bcd1f6 54%,#a3c0ef 78%,#86a9e6 100%);border-radius:4px 0 0 4px;border-bottom:1px solid #4a6db8;box-sizing:border-box"></div>
<div style="left:1021px;top:55px;width:12px;height:25px;background:linear-gradient(180deg,#82a8ec 0,#6890e0 35%,#4870cc 60%,#1c44a4 82%,#0a2c8a 100%);border-radius:0 4px 4px 0"></div>
<svg style="left:1023px;top:69px" width="8" height="8" viewBox="0 0 8 8"><path d="M1.5 1.5H6.5" stroke="#fff" stroke-width="1"/><path d="M1 0.5H6" stroke="#000" stroke-width="1"/><path d="M2 4H7L4.5 7Z" fill="#fff"/><path d="M1 3H6L3.5 6Z" fill="#000"/></svg>
<div style="left:900px;top:61px;width:2px;height:2px;background:#fff"></div>
<div style="left:899px;top:60px;width:2px;height:2px;background:#27408b"></div>
<div style="left:900px;top:65px;width:2px;height:2px;background:#fff"></div>
<div style="left:899px;top:64px;width:2px;height:2px;background:#27408b"></div>
<div style="left:900px;top:69px;width:2px;height:2px;background:#fff"></div>
<div style="left:899px;top:68px;width:2px;height:2px;background:#27408b"></div>
<div style="left:900px;top:73px;width:2px;height:2px;background:#fff"></div>
<div style="left:899px;top:72px;width:2px;height:2px;background:#27408b"></div>
<svg style="left:908px;top:59px;overflow:visible" width="16" height="16"><use href="#i_home"/></svg>
<svg style="left:931px;top:59px;overflow:visible" width="16" height="16"><use href="#i_globe"/></svg>
<svg style="left:954px;top:59px;overflow:visible" width="16" height="16"><use href="#i_person"/></svg>
<svg style="left:976px;top:59px;overflow:visible" width="16" height="16"><use href="#i_envelope"/></svg>
<svg style="left:999px;top:59px;overflow:visible" width="16" height="16"><use href="#i_cards"/></svg>
<div style="left:10px;top:104px;width:60px;height:1px;background:#a0a0a0"></div>
<div style="left:182px;top:104px;width:1096px;height:1px;background:#a0a0a0"></div>
<svg style="left:0;top:80px" width="300" height="26" viewBox="0 0 300 26">
<defs><linearGradient id="tg" x1="0" y1="0" x2="0" y2="1"><stop offset="0" stop-color="#fdfdfd"/><stop offset="1" stop-color="#e4e4e4"/></linearGradient>
<linearGradient id="ts" x1="0" y1="0" x2="0" y2="1"><stop offset="0" stop-color="#f2f8fe"/><stop offset="0.5" stop-color="#dcecfb"/><stop offset="1" stop-color="#b9d9f6"/></linearGradient></defs>
<path d="M10.5 24.5L29.5 4.5Q30.5 3.5 32 3.5H76.5Q78.5 3.5 78.5 5.5V24.5Z" fill="url(#tg)" stroke="#9a9a9a"/>
<path d="M183 13.5L192 4.5Q193 3.5 194.5 3.5H281.5Q283.5 3.5 283.5 5.5V24.5H183Z" fill="url(#tg)" stroke="#9a9a9a"/>
<path d="M69.5 25L89 4H181.5V25Z" fill="url(#ts)"/>
<path d="M69.5 24.5L89.5 3.5" stroke="#a9a9a9" fill="none"/>
<path d="M181.5 4V25" stroke="#8fb0d6" fill="none"/>
<path d="M89.5 4H182V7H86.7Z" fill="#1873d3"/>
</svg>
<svg style="left:31px;top:89px;overflow:visible" width="16" height="16"><use href="#i_home_one"/></svg>
<svg style="left:89px;top:87px;overflow:visible" width="16" height="16"><use href="#i_ruler"/></svg>
<svg style="left:193px;top:87px;overflow:visible" width="16" height="16"><use href="#i_sqldoc"/></svg>
<div style="left:1247px;top:84px;width:13px;height:17px;background:#f4f4f4;border:1px solid #adadad;box-sizing:border-box"></div>
<svg style="left:1249px;top:90px" width="9" height="5" viewBox="0 0 9 5"><path d="M0 0H9L4.5 5Z" fill="#000"/></svg>
<div style="left:1263px;top:84px;width:15px;height:17px;background:#f4f4f4;border:1px solid #adadad;box-sizing:border-box"></div>
<svg style="left:1266px;top:88px" width="9" height="9" viewBox="0 0 9 9"><path d="M1 1L8 8M8 1L1 8" stroke="#000" stroke-width="1.6" fill="none"/></svg>
<div style="left:9px;top:105px;width:195px;height:575px;background:linear-gradient(180deg,#c3c7db 0,#b1b3cb 100%)"></div>
<div style="left:19px;top:117px;width:175px;height:25px;background:linear-gradient(90deg,#c5c9db 0,#bdc0d5 50%,#b0b2cc 100%)"></div>
<div style="left:19px;top:142px;width:175px;height:31px;background:#eef0f7"></div>
<svg style="left:177px;top:126px" width="9" height="9" viewBox="0 0 9 9"><path d="M1 4L4.5 0.8L8 4M1 8.2L4.5 5L8 8.2" stroke="#000" stroke-width="1.4" fill="none"/></svg>
<div style="left:19px;top:185px;width:175px;height:25px;background:linear-gradient(90deg,#c5c9db 0,#bdc0d5 50%,#b0b2cc 100%)"></div>
<div style="left:19px;top:210px;width:175px;height:170px;background:#eef0f7"></div>
<svg style="left:177px;top:194px" width="9" height="9" viewBox="0 0 9 9"><path d="M1 4L4.5 0.8L8 4M1 8.2L4.5 5L8 8.2" stroke="#000" stroke-width="1.4" fill="none"/></svg>
<div style="left:19px;top:392px;width:175px;height:25px;background:linear-gradient(90deg,#c5c9db 0,#bdc0d5 50%,#b0b2cc 100%)"></div>
<div style="left:19px;top:417px;width:175px;height:60px;background:#eef0f7"></div>
<svg style="left:177px;top:401px" width="9" height="9" viewBox="0 0 9 9"><path d="M1 4L4.5 0.8L8 4M1 8.2L4.5 5L8 8.2" stroke="#000" stroke-width="1.4" fill="none"/></svg>
<div style="left:24px;top:146px;width:165px;height:21px;background:#fff;border:1px solid #abadb3;box-sizing:border-box"></div>
<div style="left:171px;top:146px;width:18px;height:21px;background:#e1e1e1;border:1px solid #adadad;box-sizing:border-box"></div>
<svg style="left:175px;top:154px" width="9" height="6" viewBox="0 0 9 6"><path d="M0.4 0.9L4.5 5L8.6 0.9" stroke="#404040" stroke-width="1.1" fill="none"/></svg>
<svg style="left:30px;top:149px;overflow:visible" width="16" height="16"><use href="#i_db_small"/></svg>
<svg style="left:23px;top:221px;overflow:visible" width="16" height="16"><use href="#i_play"/></svg>
<svg style="left:23px;top:243px;overflow:visible" width="16" height="16"><use href="#i_table_db"/></svg>
<svg style="left:23px;top:265px;overflow:visible" width="16" height="16"><use href="#i_clear_q"/></svg>
<svg style="left:23px;top:287px;overflow:visible" width="16" height="16"><use href="#i_help"/></svg>
<svg style="left:23px;top:309px;overflow:visible" width="16" height="16"><use href="#i_gear"/></svg>
<svg style="left:23px;top:331px;overflow:visible" width="16" height="16"><use href="#i_ruler"/></svg>
<svg style="left:23px;top:353px;overflow:visible" width="16" height="16"><use href="#i_view_db"/></svg>
<svg style="left:23px;top:428px;overflow:visible" width="16" height="16"><use href="#i_folder"/></svg>
<svg style="left:23px;top:450px;overflow:visible" width="16" height="16"><use href="#i_floppy"/></svg>
<div style="left:3px;top:304px;width:2px;height:2px;background:#fff"></div>
<div style="left:2px;top:303px;width:2px;height:2px;background:#a0a0a0"></div>
<div style="left:6px;top:307px;width:2px;height:2px;background:#fff"></div>
<div style="left:5px;top:306px;width:2px;height:2px;background:#a0a0a0"></div>
<div style="left:3px;top:310px;width:2px;height:2px;background:#fff"></div>
<div style="left:2px;top:309px;width:2px;height:2px;background:#a0a0a0"></div>
<div style="left:6px;top:313px;width:2px;height:2px;background:#fff"></div>
<div style="left:5px;top:312px;width:2px;height:2px;background:#a0a0a0"></div>
<div style="left:3px;top:316px;width:2px;height:2px;background:#fff"></div>
<div style="left:2px;top:315px;width:2px;height:2px;background:#a0a0a0"></div>
<div style="left:6px;top:319px;width:2px;height:2px;background:#fff"></div>
<div style="left:5px;top:318px;width:2px;height:2px;background:#a0a0a0"></div>
<div style="left:3px;top:322px;width:2px;height:2px;background:#fff"></div>
<div style="left:2px;top:321px;width:2px;height:2px;background:#a0a0a0"></div>
<div style="left:6px;top:325px;width:2px;height:2px;background:#fff"></div>
<div style="left:5px;top:324px;width:2px;height:2px;background:#a0a0a0"></div>
<div style="left:3px;top:328px;width:2px;height:2px;background:#fff"></div>
<div style="left:2px;top:327px;width:2px;height:2px;background:#a0a0a0"></div>
<div style="left:6px;top:331px;width:2px;height:2px;background:#fff"></div>
<div style="left:5px;top:330px;width:2px;height:2px;background:#a0a0a0"></div>
<div style="left:3px;top:334px;width:2px;height:2px;background:#fff"></div>
<div style="left:2px;top:333px;width:2px;height:2px;background:#a0a0a0"></div>
<div style="left:6px;top:337px;width:2px;height:2px;background:#fff"></div>
<div style="left:5px;top:336px;width:2px;height:2px;background:#a0a0a0"></div>
<div style="left:3px;top:340px;width:2px;height:2px;background:#fff"></div>
<div style="left:2px;top:339px;width:2px;height:2px;background:#a0a0a0"></div>
<div style="left:6px;top:343px;width:2px;height:2px;background:#fff"></div>
<div style="left:5px;top:342px;width:2px;height:2px;background:#a0a0a0"></div>
<div style="left:3px;top:346px;width:2px;height:2px;background:#fff"></div>
<div style="left:2px;top:345px;width:2px;height:2px;background:#a0a0a0"></div>
<div style="left:6px;top:349px;width:2px;height:2px;background:#fff"></div>
<div style="left:5px;top:348px;width:2px;height:2px;background:#a0a0a0"></div>
<div style="left:3px;top:352px;width:2px;height:2px;background:#fff"></div>
<div style="left:2px;top:351px;width:2px;height:2px;background:#a0a0a0"></div>
<div style="left:6px;top:355px;width:2px;height:2px;background:#fff"></div>
<div style="left:5px;top:354px;width:2px;height:2px;background:#a0a0a0"></div>
<div style="left:3px;top:358px;width:2px;height:2px;background:#fff"></div>
<div style="left:2px;top:357px;width:2px;height:2px;background:#a0a0a0"></div>
<div style="left:6px;top:361px;width:2px;height:2px;background:#fff"></div>
<div style="left:5px;top:360px;width:2px;height:2px;background:#a0a0a0"></div>
<div style="left:3px;top:364px;width:2px;height:2px;background:#fff"></div>
<div style="left:2px;top:363px;width:2px;height:2px;background:#a0a0a0"></div>
<div style="left:6px;top:367px;width:2px;height:2px;background:#fff"></div>
<div style="left:5px;top:366px;width:2px;height:2px;background:#a0a0a0"></div>
<div style="left:3px;top:370px;width:2px;height:2px;background:#fff"></div>
<div style="left:2px;top:369px;width:2px;height:2px;background:#a0a0a0"></div>
<div style="left:6px;top:373px;width:2px;height:2px;background:#fff"></div>
<div style="left:5px;top:372px;width:2px;height:2px;background:#a0a0a0"></div>
<div style="left:3px;top:376px;width:2px;height:2px;background:#fff"></div>
<div style="left:2px;top:375px;width:2px;height:2px;background:#a0a0a0"></div>
<div style="left:6px;top:379px;width:2px;height:2px;background:#fff"></div>
<div style="left:5px;top:378px;width:2px;height:2px;background:#a0a0a0"></div>
<div style="left:3px;top:382px;width:2px;height:2px;background:#fff"></div>
<div style="left:2px;top:381px;width:2px;height:2px;background:#a0a0a0"></div>
<div style="left:6px;top:385px;width:2px;height:2px;background:#fff"></div>
<div style="left:5px;top:384px;width:2px;height:2px;background:#a0a0a0"></div>
<div style="left:3px;top:388px;width:2px;height:2px;background:#fff"></div>
<div style="left:2px;top:387px;width:2px;height:2px;background:#a0a0a0"></div>
<div style="left:6px;top:391px;width:2px;height:2px;background:#fff"></div>
<div style="left:5px;top:390px;width:2px;height:2px;background:#a0a0a0"></div>
<div style="left:3px;top:394px;width:2px;height:2px;background:#fff"></div>
<div style="left:2px;top:393px;width:2px;height:2px;background:#a0a0a0"></div>
<div style="left:6px;top:397px;width:2px;height:2px;background:#fff"></div>
<div style="left:5px;top:396px;width:2px;height:2px;background:#a0a0a0"></div>
<div style="left:3px;top:400px;width:2px;height:2px;background:#fff"></div>
<div style="left:2px;top:399px;width:2px;height:2px;background:#a0a0a0"></div>
<div style="left:6px;top:403px;width:2px;height:2px;background:#fff"></div>
<div style="left:5px;top:402px;width:2px;height:2px;background:#a0a0a0"></div>
<div style="left:3px;top:406px;width:2px;height:2px;background:#fff"></div>
<div style="left:2px;top:405px;width:2px;height:2px;background:#a0a0a0"></div>
<div style="left:6px;top:409px;width:2px;height:2px;background:#fff"></div>
<div style="left:5px;top:408px;width:2px;height:2px;background:#a0a0a0"></div>
<div style="left:3px;top:412px;width:2px;height:2px;background:#fff"></div>
<div style="left:2px;top:411px;width:2px;height:2px;background:#a0a0a0"></div>
<div style="left:6px;top:415px;width:2px;height:2px;background:#fff"></div>
<div style="left:5px;top:414px;width:2px;height:2px;background:#a0a0a0"></div>
<div style="left:3px;top:418px;width:2px;height:2px;background:#fff"></div>
<div style="left:2px;top:417px;width:2px;height:2px;background:#a0a0a0"></div>
<div style="left:6px;top:421px;width:2px;height:2px;background:#fff"></div>
<div style="left:5px;top:420px;width:2px;height:2px;background:#a0a0a0"></div>
<div style="left:3px;top:424px;width:2px;height:2px;background:#fff"></div>
<div style="left:2px;top:423px;width:2px;height:2px;background:#a0a0a0"></div>
<div style="left:6px;top:427px;width:2px;height:2px;background:#fff"></div>
<div style="left:5px;top:426px;width:2px;height:2px;background:#a0a0a0"></div>
<div style="left:3px;top:430px;width:2px;height:2px;background:#fff"></div>
<div style="left:2px;top:429px;width:2px;height:2px;background:#a0a0a0"></div>
<div style="left:6px;top:433px;width:2px;height:2px;background:#fff"></div>
<div style="left:5px;top:432px;width:2px;height:2px;background:#a0a0a0"></div>
<div style="left:3px;top:436px;width:2px;height:2px;background:#fff"></div>
<div style="left:2px;top:435px;width:2px;height:2px;background:#a0a0a0"></div>
<div style="left:6px;top:439px;width:2px;height:2px;background:#fff"></div>
<div style="left:5px;top:438px;width:2px;height:2px;background:#a0a0a0"></div>
<div style="left:3px;top:442px;width:2px;height:2px;background:#fff"></div>
<div style="left:2px;top:441px;width:2px;height:2px;background:#a0a0a0"></div>
<div style="left:6px;top:445px;width:2px;height:2px;background:#fff"></div>
<div style="left:5px;top:444px;width:2px;height:2px;background:#a0a0a0"></div>
<div style="left:3px;top:448px;width:2px;height:2px;background:#fff"></div>
<div style="left:2px;top:447px;width:2px;height:2px;background:#a0a0a0"></div>
<div style="left:6px;top:451px;width:2px;height:2px;background:#fff"></div>
<div style="left:5px;top:450px;width:2px;height:2px;background:#a0a0a0"></div>
<div style="left:3px;top:454px;width:2px;height:2px;background:#fff"></div>
<div style="left:2px;top:453px;width:2px;height:2px;background:#a0a0a0"></div>
<div style="left:6px;top:457px;width:2px;height:2px;background:#fff"></div>
<div style="left:5px;top:456px;width:2px;height:2px;background:#a0a0a0"></div>
<div style="left:3px;top:460px;width:2px;height:2px;background:#fff"></div>
<div style="left:2px;top:459px;width:2px;height:2px;background:#a0a0a0"></div>
<div style="left:6px;top:463px;width:2px;height:2px;background:#fff"></div>
<div style="left:5px;top:462px;width:2px;height:2px;background:#a0a0a0"></div>
<div style="left:3px;top:466px;width:2px;height:2px;background:#fff"></div>
<div style="left:2px;top:465px;width:2px;height:2px;background:#a0a0a0"></div>
<div style="left:6px;top:469px;width:2px;height:2px;background:#fff"></div>
<div style="left:5px;top:468px;width:2px;height:2px;background:#a0a0a0"></div>
<div style="left:3px;top:472px;width:2px;height:2px;background:#fff"></div>
<div style="left:2px;top:471px;width:2px;height:2px;background:#a0a0a0"></div>
<div style="left:6px;top:475px;width:2px;height:2px;background:#fff"></div>
<div style="left:5px;top:474px;width:2px;height:2px;background:#a0a0a0"></div>
<div style="left:3px;top:478px;width:2px;height:2px;background:#fff"></div>
<div style="left:2px;top:477px;width:2px;height:2px;background:#a0a0a0"></div>
<div style="left:206px;top:311px;width:2px;height:2px;background:#fff"></div>
<div style="left:205px;top:310px;width:2px;height:2px;background:#a0a0a0"></div>
<div style="left:209px;top:314px;width:2px;height:2px;background:#fff"></div>
<div style="left:208px;top:313px;width:2px;height:2px;background:#a0a0a0"></div>
<div style="left:206px;top:317px;width:2px;height:2px;background:#fff"></div>
<div style="left:205px;top:316px;width:2px;height:2px;background:#a0a0a0"></div>
<div style="left:209px;top:320px;width:2px;height:2px;background:#fff"></div>
<div style="left:208px;top:319px;width:2px;height:2px;background:#a0a0a0"></div>
<div style="left:206px;top:323px;width:2px;height:2px;background:#fff"></div>
<div style="left:205px;top:322px;width:2px;height:2px;background:#a0a0a0"></div>
<div style="left:209px;top:326px;width:2px;height:2px;background:#fff"></div>
<div style="left:208px;top:325px;width:2px;height:2px;background:#a0a0a0"></div>
<div style="left:206px;top:329px;width:2px;height:2px;background:#fff"></div>
<div style="left:205px;top:328px;width:2px;height:2px;background:#a0a0a0"></div>
<div style="left:209px;top:332px;width:2px;height:2px;background:#fff"></div>
<div style="left:208px;top:331px;width:2px;height:2px;background:#a0a0a0"></div>
<div style="left:206px;top:335px;width:2px;height:2px;background:#fff"></div>
<div style="left:205px;top:334px;width:2px;height:2px;background:#a0a0a0"></div>
<div style="left:209px;top:338px;width:2px;height:2px;background:#fff"></div>
<div style="left:208px;top:337px;width:2px;height:2px;background:#a0a0a0"></div>
<div style="left:206px;top:341px;width:2px;height:2px;background:#fff"></div>
<div style="left:205px;top:340px;width:2px;height:2px;background:#a0a0a0"></div>
<div style="left:209px;top:344px;width:2px;height:2px;background:#fff"></div>
<div style="left:208px;top:343px;width:2px;height:2px;background:#a0a0a0"></div>
<div style="left:206px;top:347px;width:2px;height:2px;background:#fff"></div>
<div style="left:205px;top:346px;width:2px;height:2px;background:#a0a0a0"></div>
<div style="left:209px;top:350px;width:2px;height:2px;background:#fff"></div>
<div style="left:208px;top:349px;width:2px;height:2px;background:#a0a0a0"></div>
<div style="left:206px;top:353px;width:2px;height:2px;background:#fff"></div>
<div style="left:205px;top:352px;width:2px;height:2px;background:#a0a0a0"></div>
<div style="left:209px;top:356px;width:2px;height:2px;background:#fff"></div>
<div style="left:208px;top:355px;width:2px;height:2px;background:#a0a0a0"></div>
<div style="left:206px;top:359px;width:2px;height:2px;background:#fff"></div>
<div style="left:205px;top:358px;width:2px;height:2px;background:#a0a0a0"></div>
<div style="left:209px;top:362px;width:2px;height:2px;background:#fff"></div>
<div style="left:208px;top:361px;width:2px;height:2px;background:#a0a0a0"></div>
<div style="left:206px;top:365px;width:2px;height:2px;background:#fff"></div>
<div style="left:205px;top:364px;width:2px;height:2px;background:#a0a0a0"></div>
<div style="left:209px;top:368px;width:2px;height:2px;background:#fff"></div>
<div style="left:208px;top:367px;width:2px;height:2px;background:#a0a0a0"></div>
<div style="left:206px;top:371px;width:2px;height:2px;background:#fff"></div>
<div style="left:205px;top:370px;width:2px;height:2px;background:#a0a0a0"></div>
<div style="left:209px;top:374px;width:2px;height:2px;background:#fff"></div>
<div style="left:208px;top:373px;width:2px;height:2px;background:#a0a0a0"></div>
<div style="left:206px;top:377px;width:2px;height:2px;background:#fff"></div>
<div style="left:205px;top:376px;width:2px;height:2px;background:#a0a0a0"></div>
<div style="left:209px;top:380px;width:2px;height:2px;background:#fff"></div>
<div style="left:208px;top:379px;width:2px;height:2px;background:#a0a0a0"></div>
<div style="left:206px;top:383px;width:2px;height:2px;background:#fff"></div>
<div style="left:205px;top:382px;width:2px;height:2px;background:#a0a0a0"></div>
<div style="left:209px;top:386px;width:2px;height:2px;background:#fff"></div>
<div style="left:208px;top:385px;width:2px;height:2px;background:#a0a0a0"></div>
<div style="left:206px;top:389px;width:2px;height:2px;background:#fff"></div>
<div style="left:205px;top:388px;width:2px;height:2px;background:#a0a0a0"></div>
<div style="left:209px;top:392px;width:2px;height:2px;background:#fff"></div>
<div style="left:208px;top:391px;width:2px;height:2px;background:#a0a0a0"></div>
<div style="left:206px;top:395px;width:2px;height:2px;background:#fff"></div>
<div style="left:205px;top:394px;width:2px;height:2px;background:#a0a0a0"></div>
<div style="left:209px;top:398px;width:2px;height:2px;background:#fff"></div>
<div style="left:208px;top:397px;width:2px;height:2px;background:#a0a0a0"></div>
<div style="left:206px;top:401px;width:2px;height:2px;background:#fff"></div>
<div style="left:205px;top:400px;width:2px;height:2px;background:#a0a0a0"></div>
<div style="left:209px;top:404px;width:2px;height:2px;background:#fff"></div>
<div style="left:208px;top:403px;width:2px;height:2px;background:#a0a0a0"></div>
<div style="left:206px;top:407px;width:2px;height:2px;background:#fff"></div>
<div style="left:205px;top:406px;width:2px;height:2px;background:#a0a0a0"></div>
<div style="left:209px;top:410px;width:2px;height:2px;background:#fff"></div>
<div style="left:208px;top:409px;width:2px;height:2px;background:#a0a0a0"></div>
<div style="left:206px;top:413px;width:2px;height:2px;background:#fff"></div>
<div style="left:205px;top:412px;width:2px;height:2px;background:#a0a0a0"></div>
<div style="left:209px;top:416px;width:2px;height:2px;background:#fff"></div>
<div style="left:208px;top:415px;width:2px;height:2px;background:#a0a0a0"></div>
<div style="left:206px;top:419px;width:2px;height:2px;background:#fff"></div>
<div style="left:205px;top:418px;width:2px;height:2px;background:#a0a0a0"></div>
<div style="left:209px;top:422px;width:2px;height:2px;background:#fff"></div>
<div style="left:208px;top:421px;width:2px;height:2px;background:#a0a0a0"></div>
<div style="left:206px;top:425px;width:2px;height:2px;background:#fff"></div>
<div style="left:205px;top:424px;width:2px;height:2px;background:#a0a0a0"></div>
<div style="left:209px;top:428px;width:2px;height:2px;background:#fff"></div>
<div style="left:208px;top:427px;width:2px;height:2px;background:#a0a0a0"></div>
<div style="left:206px;top:431px;width:2px;height:2px;background:#fff"></div>
<div style="left:205px;top:430px;width:2px;height:2px;background:#a0a0a0"></div>
<div style="left:209px;top:434px;width:2px;height:2px;background:#fff"></div>
<div style="left:208px;top:433px;width:2px;height:2px;background:#a0a0a0"></div>
<div style="left:206px;top:437px;width:2px;height:2px;background:#fff"></div>
<div style="left:205px;top:436px;width:2px;height:2px;background:#a0a0a0"></div>
<div style="left:209px;top:440px;width:2px;height:2px;background:#fff"></div>
<div style="left:208px;top:439px;width:2px;height:2px;background:#a0a0a0"></div>
<div style="left:206px;top:443px;width:2px;height:2px;background:#fff"></div>
<div style="left:205px;top:442px;width:2px;height:2px;background:#a0a0a0"></div>
<div style="left:209px;top:446px;width:2px;height:2px;background:#fff"></div>
<div style="left:208px;top:445px;width:2px;height:2px;background:#a0a0a0"></div>
<div style="left:206px;top:449px;width:2px;height:2px;background:#fff"></div>
<div style="left:205px;top:448px;width:2px;height:2px;background:#a0a0a0"></div>
<div style="left:209px;top:452px;width:2px;height:2px;background:#fff"></div>
<div style="left:208px;top:451px;width:2px;height:2px;background:#a0a0a0"></div>
<div style="left:206px;top:455px;width:2px;height:2px;background:#fff"></div>
<div style="left:205px;top:454px;width:2px;height:2px;background:#a0a0a0"></div>
<div style="left:209px;top:458px;width:2px;height:2px;background:#fff"></div>
<div style="left:208px;top:457px;width:2px;height:2px;background:#a0a0a0"></div>
<div style="left:206px;top:461px;width:2px;height:2px;background:#fff"></div>
<div style="left:205px;top:460px;width:2px;height:2px;background:#a0a0a0"></div>
<div style="left:209px;top:464px;width:2px;height:2px;background:#fff"></div>
<div style="left:208px;top:463px;width:2px;height:2px;background:#a0a0a0"></div>
<div style="left:206px;top:467px;width:2px;height:2px;background:#fff"></div>
<div style="left:205px;top:466px;width:2px;height:2px;background:#a0a0a0"></div>
<div style="left:209px;top:470px;width:2px;height:2px;background:#fff"></div>
<div style="left:208px;top:469px;width:2px;height:2px;background:#a0a0a0"></div>
<div style="left:206px;top:473px;width:2px;height:2px;background:#fff"></div>
<div style="left:205px;top:472px;width:2px;height:2px;background:#a0a0a0"></div>
<div style="left:213px;top:105px;width:75px;height:26px;background:#fff"></div>
<div style="left:288px;top:107px;width:61px;height:20px;background:#f0f0f0;border:1px solid #d9d9d9;box-sizing:border-box"></div>
<div style="left:348px;top:107px;width:63px;height:20px;background:#f0f0f0;border:1px solid #d9d9d9;box-sizing:border-box"></div>
<svg style="left:220px;top:107px;overflow:visible" width="16" height="16"><use href="#i_diagram"/></svg>
<svg style="left:293px;top:109px;overflow:visible" width="16" height="16"><use href="#i_sqldoc"/></svg>
<svg style="left:356px;top:111px;overflow:visible" width="16" height="16"><use href="#i_result"/></svg>
<div style="left:212px;top:105px;width:1px;height:574px;background:#dcdcdc"></div>
<div style="left:212px;top:678px;width:1065px;height:1px;background:#dcdcdc"></div>
<div style="left:1276px;top:127px;width:1px;height:552px;background:#dcdcdc"></div>
<div style="left:411px;top:126px;width:866px;height:1px;background:#dcdcdc"></div>
<div style="left:213px;top:127px;width:1063px;height:551px;background:#fff"></div>
<div style="left:213px;top:127px;width:1063px;height:3px;background:#fff"></div>
<div style="left:216px;top:130px;width:1058px;height:545px;background:#f0f0f0;border:1px solid #a0a0a0;border-top-color:#555;border-left-color:#555;box-sizing:border-box"></div>
<div style="left:217px;top:131px;width:1056px;height:1px;background:#e6e6e6"></div>
<div style="left:217px;top:131px;width:1px;height:543px;background:#fff"></div>
<div style="left:218px;top:132px;width:150px;height:21px;background:#fff;border:1px solid #a9adb8;box-sizing:border-box"></div>
<div style="left:350px;top:132px;width:18px;height:21px;background:#e1e1e1;border:1px solid #adadad;box-sizing:border-box"></div>
<svg style="left:354px;top:140px" width="9" height="6" viewBox="0 0 9 6"><path d="M0.4 0.7L4.5 4.8L8.6 0.7" stroke="#404040" stroke-width="1.1" fill="none"/></svg>
<div style="left:219px;top:154px;width:148px;height:519px;background:#fff;border:1px solid #828790;box-sizing:border-box"></div>
<div style="left:228px;top:163px;width:1px;height:1px;background:#808080"></div>
<div style="left:230px;top:163px;width:1px;height:1px;background:#808080"></div>
<div style="left:232px;top:163px;width:1px;height:1px;background:#808080"></div>
<div style="left:234px;top:163px;width:1px;height:1px;background:#808080"></div>
<div style="left:236px;top:163px;width:1px;height:1px;background:#808080"></div>
<div style="left:238px;top:163px;width:1px;height:1px;background:#808080"></div>
<svg style="left:240px;top:156px;overflow:visible" width="16" height="16"><use href="#i_query"/></svg>
<div style="left:258px;top:155px;width:43px;height:16px;background:#cce8ff;border:1px solid #99d1ff;box-sizing:border-box"></div>
<div style="left:376px;top:153px;width:895px;height:520px;background:#fff;border:1px solid #dcdcdc;box-sizing:border-box"></div>
<div style="left:376px;top:131px;width:77px;height:23px;background:#fff;border:1px solid #dcdcdc;border-bottom:none;box-sizing:border-box"></div>
<svg style="left:385px;top:135px;overflow:visible" width="16" height="16"><use href="#i_query"/></svg>
<div style="left:380px;top:157px;width:888px;height:512px;background:#f0f0f0;border:1px solid #a0a0a0;border-top-color:#555;border-left-color:#555;box-sizing:border-box"></div>
<div style="left:1250px;top:158px;width:17px;height:334px;background:#f0f0f0;border-left:1px solid #fff;box-sizing:border-box"></div>
<div style="left:1251px;top:176px;width:15px;height:20px;background:#cdcdcd"></div>
<svg style="left:1255px;top:165px" width="8" height="6" viewBox="0 0 8 6"><path d="M0.7 5L4 1.6L7.3 5" stroke="#505050" stroke-width="2" fill="none"/></svg>
<svg style="left:1255px;top:481px" width="8" height="6" viewBox="0 0 8 6"><path d="M0.7 1L4 4.4L7.3 1" stroke="#505050" stroke-width="2" fill="none"/></svg>
<div style="left:381px;top:492px;width:869px;height:17px;background:#f0f0f0;border-top:1px solid #fff;box-sizing:border-box"></div>
<div style="left:399px;top:493px;width:145px;height:15px;background:#cdcdcd"></div>
<svg style="left:387px;top:496px" width="6" height="8" viewBox="0 0 6 8"><path d="M5 0.7L1.6 4L5 7.3" stroke="#505050" stroke-width="2" fill="none"/></svg>
<svg style="left:1239px;top:496px" width="6" height="8" viewBox="0 0 6 8"><path d="M1 0.7L4.4 4L1 7.3" stroke="#505050" stroke-width="2" fill="none"/></svg>
<div style="left:400px;top:181px;width:131px;height:300px;background:#fff;border:1px solid #a0a0a0;box-sizing:border-box"></div>
<div style="left:402px;top:183px;width:127px;height:17px;background:linear-gradient(180deg,#fbfbfb 0,#ececec 60%,#dedede 100%);border:1px solid #d4d4d4;box-sizing:border-box"></div>
<div style="left:407px;top:186px;width:11px;height:11px;background:#fff;border:1px solid #b5b5b5;box-sizing:border-box"></div>
<svg style="left:407px;top:186px" width="11" height="11" viewBox="0 0 11 11"><path d="M2 5.2L4.3 7.6L9 2.6" stroke="#a0a0a0" stroke-width="1.9" fill="none"/></svg>
<div style="left:501px;top:185px;width:13px;height:13px;background:rgba(255,255,255,.4);border:1px solid #6a6a6a;box-sizing:border-box"></div>
<svg style="left:504px;top:190px" width="7" height="4" viewBox="0 0 7 4"><path d="M0 0H7L3.5 4Z" fill="#000"/></svg>
<div style="left:514px;top:185px;width:13px;height:13px;background:rgba(255,255,255,.4);border:1px solid #6a6a6a;box-sizing:border-box"></div>
<svg style="left:516px;top:187px" width="9" height="9" viewBox="0 0 9 9"><path d="M1.8 1.8L7.2 7.2M7.2 1.8L1.8 7.2" stroke="#000" stroke-width="1.25" fill="none"/></svg>
<div style="left:402px;top:202px;width:127px;height:277px;background:#fff;border:1px solid #a0a0a0;box-sizing:border-box;overflow:hidden"></div>
<div style="left:407px;top:206px;width:11px;height:11px;background:#fff;border:1px solid #9a9a9a;box-sizing:border-box"></div>
<div style="left:407px;top:223px;width:11px;height:11px;background:#fff;border:1px solid #9a9a9a;box-sizing:border-box"></div>
<svg style="left:407px;top:223px" width="11" height="11" viewBox="0 0 11 11"><path d="M2 5.2L4.3 7.6L9 2.6" stroke="#000" stroke-width="1.9" fill="none"/></svg>
<div style="left:407px;top:240px;width:11px;height:11px;background:#fff;border:1px solid #9a9a9a;box-sizing:border-box"></div>
<div style="left:407px;top:257px;width:11px;height:11px;background:#fff;border:1px solid #9a9a9a;box-sizing:border-box"></div>
<div style="left:407px;top:274px;width:11px;height:11px;background:#fff;border:1px solid #9a9a9a;box-sizing:border-box"></div>
<div style="left:407px;top:291px;width:11px;height:11px;background:#fff;border:1px solid #9a9a9a;box-sizing:border-box"></div>
<div style="left:407px;top:308px;width:11px;height:11px;background:#fff;border:1px solid #9a9a9a;box-sizing:border-box"></div>
<div style="left:407px;top:325px;width:11px;height:11px;background:#fff;border:1px solid #9a9a9a;box-sizing:border-box"></div>
<div style="left:407px;top:342px;width:11px;height:11px;background:#fff;border:1px solid #9a9a9a;box-sizing:border-box"></div>
<div style="left:407px;top:359px;width:11px;height:11px;background:#fff;border:1px solid #9a9a9a;box-sizing:border-box"></div>
<div style="left:407px;top:376px;width:11px;height:11px;background:#fff;border:1px solid #9a9a9a;box-sizing:border-box"></div>
<div style="left:407px;top:393px;width:11px;height:11px;background:#fff;border:1px solid #9a9a9a;box-sizing:border-box"></div>
<div style="left:407px;top:410px;width:11px;height:11px;background:#fff;border:1px solid #9a9a9a;box-sizing:border-box"></div>
<div style="left:407px;top:427px;width:11px;height:11px;background:#fff;border:1px solid #9a9a9a;box-sizing:border-box"></div>
<div style="left:407px;top:444px;width:11px;height:11px;background:#fff;border:1px solid #9a9a9a;box-sizing:border-box"></div>
<div style="left:407px;top:461px;width:11px;height:11px;background:#fff;border:1px solid #9a9a9a;box-sizing:border-box"></div>
<div style="left:620px;top:300px;width:109px;height:113px;background:#fff;border:1px solid #a0a0a0;box-sizing:border-box"></div>
<div style="left:622px;top:302px;width:105px;height:17px;background:linear-gradient(180deg,#f3fafe 0,#dff1fc 50%,#c4e5fa 100%);border:1px solid #98d2f5;box-sizing:border-box"></div>
<div style="left:627px;top:305px;width:11px;height:11px;background:#fff;border:1px solid #b5b5b5;box-sizing:border-box"></div>
<div style="left:699px;top:304px;width:13px;height:13px;background:rgba(255,255,255,.4);border:1px solid #6a6a6a;box-sizing:border-box"></div>
<svg style="left:702px;top:309px" width="7" height="4" viewBox="0 0 7 4"><path d="M0 0H7L3.5 4Z" fill="#000"/></svg>
<div style="left:712px;top:304px;width:13px;height:13px;background:rgba(255,255,255,.4);border:1px solid #6a6a6a;box-sizing:border-box"></div>
<svg style="left:714px;top:306px" width="9" height="9" viewBox="0 0 9 9"><path d="M1.8 1.8L7.2 7.2M7.2 1.8L1.8 7.2" stroke="#000" stroke-width="1.25" fill="none"/></svg>
<div style="left:622px;top:321px;width:105px;height:90px;background:#fff;border:1px solid #a0a0a0;box-sizing:border-box;overflow:hidden"></div>
<div style="left:627px;top:325px;width:11px;height:11px;background:#fff;border:1px solid #9a9a9a;box-sizing:border-box"></div>
<div style="left:627px;top:342px;width:11px;height:11px;background:#fff;border:1px solid #9a9a9a;box-sizing:border-box"></div>
<div style="left:627px;top:359px;width:11px;height:11px;background:#fff;border:1px solid #9a9a9a;box-sizing:border-box"></div>
<div style="left:627px;top:376px;width:11px;height:11px;background:#fff;border:1px solid #9a9a9a;box-sizing:border-box"></div>
<div style="left:627px;top:393px;width:11px;height:11px;background:#fff;border:1px solid #9a9a9a;box-sizing:border-box"></div>
<div style="left:820px;top:164px;width:156px;height:303px;background:#fff;border:1px solid #a0a0a0;box-sizing:border-box"></div>
<div style="left:822px;top:166px;width:152px;height:17px;background:linear-gradient(180deg,#fbfbfb 0,#ececec 60%,#dedede 100%);border:1px solid #d4d4d4;box-sizing:border-box"></div>
<div style="left:827px;top:169px;width:11px;height:11px;background:#fff;border:1px solid #b5b5b5;box-sizing:border-box"></div>
<svg style="left:827px;top:169px" width="11" height="11" viewBox="0 0 11 11"><path d="M2 5.2L4.3 7.6L9 2.6" stroke="#a0a0a0" stroke-width="1.9" fill="none"/></svg>
<div style="left:946px;top:168px;width:13px;height:13px;background:rgba(255,255,255,.4);border:1px solid #6a6a6a;box-sizing:border-box"></div>
<svg style="left:949px;top:173px" width="7" height="4" viewBox="0 0 7 4"><path d="M0 0H7L3.5 4Z" fill="#000"/></svg>
<div style="left:959px;top:168px;width:13px;height:13px;background:rgba(255,255,255,.4);border:1px solid #6a6a6a;box-sizing:border-box"></div>
<svg style="left:961px;top:170px" width="9" height="9" viewBox="0 0 9 9"><path d="M1.8 1.8L7.2 7.2M7.2 1.8L1.8 7.2" stroke="#000" stroke-width="1.25" fill="none"/></svg>
<div style="left:822px;top:185px;width:152px;height:280px;background:#fff;border:1px solid #a0a0a0;box-sizing:border-box;overflow:hidden"></div>
<div style="left:827px;top:189px;width:11px;height:11px;background:#fff;border:1px solid #9a9a9a;box-sizing:border-box"></div>
<div style="left:827px;top:206px;width:11px;height:11px;background:#fff;border:1px solid #9a9a9a;box-sizing:border-box"></div>
<div style="left:827px;top:223px;width:11px;height:11px;background:#fff;border:1px solid #9a9a9a;box-sizing:border-box"></div>
<svg style="left:827px;top:223px" width="11" height="11" viewBox="0 0 11 11"><path d="M2 5.2L4.3 7.6L9 2.6" stroke="#000" stroke-width="1.9" fill="none"/></svg>
<div style="left:827px;top:240px;width:11px;height:11px;background:#fff;border:1px solid #9a9a9a;box-sizing:border-box"></div>
<div style="left:827px;top:257px;width:11px;height:11px;background:#fff;border:1px solid #9a9a9a;box-sizing:border-box"></div>
<svg style="left:827px;top:257px" width="11" height="11" viewBox="0 0 11 11"><path d="M2 5.2L4.3 7.6L9 2.6" stroke="#000" stroke-width="1.9" fill="none"/></svg>
<div style="left:827px;top:274px;width:11px;height:11px;background:#fff;border:1px solid #9a9a9a;box-sizing:border-box"></div>
<div style="left:827px;top:291px;width:11px;height:11px;background:#fff;border:1px solid #9a9a9a;box-sizing:border-box"></div>
<div style="left:827px;top:308px;width:11px;height:11px;background:#fff;border:1px solid #9a9a9a;box-sizing:border-box"></div>
<div style="left:827px;top:325px;width:11px;height:11px;background:#fff;border:1px solid #9a9a9a;box-sizing:border-box"></div>
<div style="left:827px;top:342px;width:11px;height:11px;background:#fff;border:1px solid #9a9a9a;box-sizing:border-box"></div>
<div style="left:827px;top:359px;width:11px;height:11px;background:#fff;border:1px solid #9a9a9a;box-sizing:border-box"></div>
<div style="left:827px;top:376px;width:11px;height:11px;background:#fff;border:1px solid #9a9a9a;box-sizing:border-box"></div>
<div style="left:827px;top:393px;width:11px;height:11px;background:#fff;border:1px solid #9a9a9a;box-sizing:border-box"></div>
<svg style="left:827px;top:393px" width="11" height="11" viewBox="0 0 11 11"><path d="M2 5.2L4.3 7.6L9 2.6" stroke="#000" stroke-width="1.9" fill="none"/></svg>
<div style="left:827px;top:410px;width:11px;height:11px;background:#fff;border:1px solid #9a9a9a;box-sizing:border-box"></div>
<div style="left:827px;top:427px;width:11px;height:11px;background:#fff;border:1px solid #9a9a9a;box-sizing:border-box"></div>
<div style="left:827px;top:444px;width:11px;height:11px;background:#fff;border:1px solid #9a9a9a;box-sizing:border-box"></div>
<div style="left:827px;top:461px;width:11px;height:3px;background:#fff;border:1px solid #9a9a9a;box-sizing:border-box;border-bottom:none"></div>
<div style="left:1098px;top:317px;width:110px;height:130px;background:#fff;border:1px solid #a0a0a0;box-sizing:border-box"></div>
<div style="left:1100px;top:319px;width:106px;height:17px;background:linear-gradient(180deg,#fbfbfb 0,#ececec 60%,#dedede 100%);border:1px solid #d4d4d4;box-sizing:border-box"></div>
<div style="left:1105px;top:322px;width:11px;height:11px;background:#fff;border:1px solid #b5b5b5;box-sizing:border-box"></div>
<svg style="left:1105px;top:322px" width="11" height="11" viewBox="0 0 11 11"><path d="M2 5.2L4.3 7.6L9 2.6" stroke="#a0a0a0" stroke-width="1.9" fill="none"/></svg>
<div style="left:1178px;top:321px;width:13px;height:13px;background:rgba(255,255,255,.4);border:1px solid #6a6a6a;box-sizing:border-box"></div>
<svg style="left:1181px;top:326px" width="7" height="4" viewBox="0 0 7 4"><path d="M0 0H7L3.5 4Z" fill="#000"/></svg>
<div style="left:1191px;top:321px;width:13px;height:13px;background:rgba(255,255,255,.4);border:1px solid #6a6a6a;box-sizing:border-box"></div>
<svg style="left:1193px;top:323px" width="9" height="9" viewBox="0 0 9 9"><path d="M1.8 1.8L7.2 7.2M7.2 1.8L1.8 7.2" stroke="#000" stroke-width="1.25" fill="none"/></svg>
<div style="left:1100px;top:338px;width:106px;height:107px;background:#fff;border:1px solid #a0a0a0;box-sizing:border-box;overflow:hidden"></div>
<div style="left:1105px;top:342px;width:11px;height:11px;background:#fff;border:1px solid #9a9a9a;box-sizing:border-box"></div>
<div style="left:1105px;top:359px;width:11px;height:11px;background:#fff;border:1px solid #9a9a9a;box-sizing:border-box"></div>
<svg style="left:1105px;top:359px" width="11" height="11" viewBox="0 0 11 11"><path d="M2 5.2L4.3 7.6L9 2.6" stroke="#000" stroke-width="1.9" fill="none"/></svg>
<div style="left:1105px;top:376px;width:11px;height:11px;background:#fff;border:1px solid #9a9a9a;box-sizing:border-box"></div>
<div style="left:1105px;top:393px;width:11px;height:11px;background:#fff;border:1px solid #9a9a9a;box-sizing:border-box"></div>
<div style="left:1105px;top:410px;width:11px;height:11px;background:#fff;border:1px solid #9a9a9a;box-sizing:border-box"></div>
<div style="left:1105px;top:427px;width:11px;height:11px;background:#fff;border:1px solid #9a9a9a;box-sizing:border-box"></div>
<svg style="left:530px;top:207px" width="291" height="9" viewBox="0 0 291 9"><path d="M4 4.5H287" stroke="#000" stroke-width="1"/><path d="M0.5 4.5L4 1L7.5 4.5L4 8Z" fill="#000"/><path d="M283.5 4.5L287 1L290.5 4.5L287 8Z" fill="#000"/></svg>
<svg style="left:728px;top:326px" width="93" height="9" viewBox="0 0 93 9"><path d="M4 4.5H89" stroke="#000" stroke-width="1"/><path d="M0.5 4.5L4 1L7.5 4.5L4 8Z" fill="#000"/><path d="M85.5 4.5L89 1L92.5 4.5L89 8Z" fill="#000"/></svg>
<svg style="left:975px;top:343px" width="124" height="9" viewBox="0 0 124 9"><path d="M4 4.5H120" stroke="#000" stroke-width="1"/><path d="M0.5 4.5L4 1L7.5 4.5L4 8Z" fill="#000"/><path d="M116.5 4.5L120 1L123.5 4.5L120 8Z" fill="#000"/></svg>
<div style="left:697px;top:511px;width:2px;height:2px;background:#fff"></div>
<div style="left:696px;top:510px;width:2px;height:2px;background:#a0a0a0"></div>
<div style="left:700px;top:514px;width:2px;height:2px;background:#fff"></div>
<div style="left:699px;top:513px;width:2px;height:2px;background:#a0a0a0"></div>
<div style="left:703px;top:511px;width:2px;height:2px;background:#fff"></div>
<div style="left:702px;top:510px;width:2px;height:2px;background:#a0a0a0"></div>
<div style="left:706px;top:514px;width:2px;height:2px;background:#fff"></div>
<div style="left:705px;top:513px;width:2px;height:2px;background:#a0a0a0"></div>
<div style="left:709px;top:511px;width:2px;height:2px;background:#fff"></div>
<div style="left:708px;top:510px;width:2px;height:2px;background:#a0a0a0"></div>
<div style="left:712px;top:514px;width:2px;height:2px;background:#fff"></div>
<div style="left:711px;top:513px;width:2px;height:2px;background:#a0a0a0"></div>
<div style="left:715px;top:511px;width:2px;height:2px;background:#fff"></div>
<div style="left:714px;top:510px;width:2px;height:2px;background:#a0a0a0"></div>
<div style="left:718px;top:514px;width:2px;height:2px;background:#fff"></div>
<div style="left:717px;top:513px;width:2px;height:2px;background:#a0a0a0"></div>
<div style="left:721px;top:511px;width:2px;height:2px;background:#fff"></div>
<div style="left:720px;top:510px;width:2px;height:2px;background:#a0a0a0"></div>
<div style="left:724px;top:514px;width:2px;height:2px;background:#fff"></div>
<div style="left:723px;top:513px;width:2px;height:2px;background:#a0a0a0"></div>
<div style="left:727px;top:511px;width:2px;height:2px;background:#fff"></div>
<div style="left:726px;top:510px;width:2px;height:2px;background:#a0a0a0"></div>
<div style="left:730px;top:514px;width:2px;height:2px;background:#fff"></div>
<div style="left:729px;top:513px;width:2px;height:2px;background:#a0a0a0"></div>
<div style="left:733px;top:511px;width:2px;height:2px;background:#fff"></div>
<div style="left:732px;top:510px;width:2px;height:2px;background:#a0a0a0"></div>
<div style="left:736px;top:514px;width:2px;height:2px;background:#fff"></div>
<div style="left:735px;top:513px;width:2px;height:2px;background:#a0a0a0"></div>
<div style="left:739px;top:511px;width:2px;height:2px;background:#fff"></div>
<div style="left:738px;top:510px;width:2px;height:2px;background:#a0a0a0"></div>
<div style="left:742px;top:514px;width:2px;height:2px;background:#fff"></div>
<div style="left:741px;top:513px;width:2px;height:2px;background:#a0a0a0"></div>
<div style="left:745px;top:511px;width:2px;height:2px;background:#fff"></div>
<div style="left:744px;top:510px;width:2px;height:2px;background:#a0a0a0"></div>
<div style="left:748px;top:514px;width:2px;height:2px;background:#fff"></div>
<div style="left:747px;top:513px;width:2px;height:2px;background:#a0a0a0"></div>
<div style="left:751px;top:511px;width:2px;height:2px;background:#fff"></div>
<div style="left:750px;top:510px;width:2px;height:2px;background:#a0a0a0"></div>
<div style="left:754px;top:514px;width:2px;height:2px;background:#fff"></div>
<div style="left:753px;top:513px;width:2px;height:2px;background:#a0a0a0"></div>
<div style="left:757px;top:511px;width:2px;height:2px;background:#fff"></div>
<div style="left:756px;top:510px;width:2px;height:2px;background:#a0a0a0"></div>
<div style="left:760px;top:514px;width:2px;height:2px;background:#fff"></div>
<div style="left:759px;top:513px;width:2px;height:2px;background:#a0a0a0"></div>
<div style="left:763px;top:511px;width:2px;height:2px;background:#fff"></div>
<div style="left:762px;top:510px;width:2px;height:2px;background:#a0a0a0"></div>
<div style="left:766px;top:514px;width:2px;height:2px;background:#fff"></div>
<div style="left:765px;top:513px;width:2px;height:2px;background:#a0a0a0"></div>
<div style="left:769px;top:511px;width:2px;height:2px;background:#fff"></div>
<div style="left:768px;top:510px;width:2px;height:2px;background:#a0a0a0"></div>
<div style="left:772px;top:514px;width:2px;height:2px;background:#fff"></div>
<div style="left:771px;top:513px;width:2px;height:2px;background:#a0a0a0"></div>
<div style="left:775px;top:511px;width:2px;height:2px;background:#fff"></div>
<div style="left:774px;top:510px;width:2px;height:2px;background:#a0a0a0"></div>
<div style="left:778px;top:514px;width:2px;height:2px;background:#fff"></div>
<div style="left:777px;top:513px;width:2px;height:2px;background:#a0a0a0"></div>
<div style="left:781px;top:511px;width:2px;height:2px;background:#fff"></div>
<div style="left:780px;top:510px;width:2px;height:2px;background:#a0a0a0"></div>
<div style="left:784px;top:514px;width:2px;height:2px;background:#fff"></div>
<div style="left:783px;top:513px;width:2px;height:2px;background:#a0a0a0"></div>
<div style="left:787px;top:511px;width:2px;height:2px;background:#fff"></div>
<div style="left:786px;top:510px;width:2px;height:2px;background:#a0a0a0"></div>
<div style="left:790px;top:514px;width:2px;height:2px;background:#fff"></div>
<div style="left:789px;top:513px;width:2px;height:2px;background:#a0a0a0"></div>
<div style="left:793px;top:511px;width:2px;height:2px;background:#fff"></div>
<div style="left:792px;top:510px;width:2px;height:2px;background:#a0a0a0"></div>
<div style="left:796px;top:514px;width:2px;height:2px;background:#fff"></div>
<div style="left:795px;top:513px;width:2px;height:2px;background:#a0a0a0"></div>
<div style="left:799px;top:511px;width:2px;height:2px;background:#fff"></div>
<div style="left:798px;top:510px;width:2px;height:2px;background:#a0a0a0"></div>
<div style="left:802px;top:514px;width:2px;height:2px;background:#fff"></div>
<div style="left:801px;top:513px;width:2px;height:2px;background:#a0a0a0"></div>
<div style="left:805px;top:511px;width:2px;height:2px;background:#fff"></div>
<div style="left:804px;top:510px;width:2px;height:2px;background:#a0a0a0"></div>
<div style="left:808px;top:514px;width:2px;height:2px;background:#fff"></div>
<div style="left:807px;top:513px;width:2px;height:2px;background:#a0a0a0"></div>
<div style="left:811px;top:511px;width:2px;height:2px;background:#fff"></div>
<div style="left:810px;top:510px;width:2px;height:2px;background:#a0a0a0"></div>
<div style="left:814px;top:514px;width:2px;height:2px;background:#fff"></div>
<div style="left:813px;top:513px;width:2px;height:2px;background:#a0a0a0"></div>
<div style="left:817px;top:511px;width:2px;height:2px;background:#fff"></div>
<div style="left:816px;top:510px;width:2px;height:2px;background:#a0a0a0"></div>
<div style="left:820px;top:514px;width:2px;height:2px;background:#fff"></div>
<div style="left:819px;top:513px;width:2px;height:2px;background:#a0a0a0"></div>
<div style="left:823px;top:511px;width:2px;height:2px;background:#fff"></div>
<div style="left:822px;top:510px;width:2px;height:2px;background:#a0a0a0"></div>
<div style="left:826px;top:514px;width:2px;height:2px;background:#fff"></div>
<div style="left:825px;top:513px;width:2px;height:2px;background:#a0a0a0"></div>
<div style="left:829px;top:511px;width:2px;height:2px;background:#fff"></div>
<div style="left:828px;top:510px;width:2px;height:2px;background:#a0a0a0"></div>
<div style="left:832px;top:514px;width:2px;height:2px;background:#fff"></div>
<div style="left:831px;top:513px;width:2px;height:2px;background:#a0a0a0"></div>
<div style="left:835px;top:511px;width:2px;height:2px;background:#fff"></div>
<div style="left:834px;top:510px;width:2px;height:2px;background:#a0a0a0"></div>
<div style="left:838px;top:514px;width:2px;height:2px;background:#fff"></div>
<div style="left:837px;top:513px;width:2px;height:2px;background:#a0a0a0"></div>
<div style="left:841px;top:511px;width:2px;height:2px;background:#fff"></div>
<div style="left:840px;top:510px;width:2px;height:2px;background:#a0a0a0"></div>
<div style="left:844px;top:514px;width:2px;height:2px;background:#fff"></div>
<div style="left:843px;top:513px;width:2px;height:2px;background:#a0a0a0"></div>
<div style="left:847px;top:511px;width:2px;height:2px;background:#fff"></div>
<div style="left:846px;top:510px;width:2px;height:2px;background:#a0a0a0"></div>
<div style="left:850px;top:514px;width:2px;height:2px;background:#fff"></div>
<div style="left:849px;top:513px;width:2px;height:2px;background:#a0a0a0"></div>
<div style="left:853px;top:511px;width:2px;height:2px;background:#fff"></div>
<div style="left:852px;top:510px;width:2px;height:2px;background:#a0a0a0"></div>
<div style="left:856px;top:514px;width:2px;height:2px;background:#fff"></div>
<div style="left:855px;top:513px;width:2px;height:2px;background:#a0a0a0"></div>
<div style="left:859px;top:511px;width:2px;height:2px;background:#fff"></div>
<div style="left:858px;top:510px;width:2px;height:2px;background:#a0a0a0"></div>
<div style="left:862px;top:514px;width:2px;height:2px;background:#fff"></div>
<div style="left:861px;top:513px;width:2px;height:2px;background:#a0a0a0"></div>
<div style="left:865px;top:511px;width:2px;height:2px;background:#fff"></div>
<div style="left:864px;top:510px;width:2px;height:2px;background:#a0a0a0"></div>
<div style="left:868px;top:514px;width:2px;height:2px;background:#fff"></div>
<div style="left:867px;top:513px;width:2px;height:2px;background:#a0a0a0"></div>
<div style="left:871px;top:511px;width:2px;height:2px;background:#fff"></div>
<div style="left:870px;top:510px;width:2px;height:2px;background:#a0a0a0"></div>
<div style="left:874px;top:514px;width:2px;height:2px;background:#fff"></div>
<div style="left:873px;top:513px;width:2px;height:2px;background:#a0a0a0"></div>
<div style="left:877px;top:511px;width:2px;height:2px;background:#fff"></div>
<div style="left:876px;top:510px;width:2px;height:2px;background:#a0a0a0"></div>
<div style="left:880px;top:514px;width:2px;height:2px;background:#fff"></div>
<div style="left:879px;top:513px;width:2px;height:2px;background:#a0a0a0"></div>
<div style="left:883px;top:511px;width:2px;height:2px;background:#fff"></div>
<div style="left:882px;top:510px;width:2px;height:2px;background:#a0a0a0"></div>
<div style="left:886px;top:514px;width:2px;height:2px;background:#fff"></div>
<div style="left:885px;top:513px;width:2px;height:2px;background:#a0a0a0"></div>
<div style="left:889px;top:511px;width:2px;height:2px;background:#fff"></div>
<div style="left:888px;top:510px;width:2px;height:2px;background:#a0a0a0"></div>
<div style="left:892px;top:514px;width:2px;height:2px;background:#fff"></div>
<div style="left:891px;top:513px;width:2px;height:2px;background:#a0a0a0"></div>
<div style="left:895px;top:511px;width:2px;height:2px;background:#fff"></div>
<div style="left:894px;top:510px;width:2px;height:2px;background:#a0a0a0"></div>
<div style="left:898px;top:514px;width:2px;height:2px;background:#fff"></div>
<div style="left:897px;top:513px;width:2px;height:2px;background:#a0a0a0"></div>
<div style="left:901px;top:511px;width:2px;height:2px;background:#fff"></div>
<div style="left:900px;top:510px;width:2px;height:2px;background:#a0a0a0"></div>
<div style="left:904px;top:514px;width:2px;height:2px;background:#fff"></div>
<div style="left:903px;top:513px;width:2px;height:2px;background:#a0a0a0"></div>
<div style="left:907px;top:511px;width:2px;height:2px;background:#fff"></div>
<div style="left:906px;top:510px;width:2px;height:2px;background:#a0a0a0"></div>
<div style="left:910px;top:514px;width:2px;height:2px;background:#fff"></div>
<div style="left:909px;top:513px;width:2px;height:2px;background:#a0a0a0"></div>
<div style="left:913px;top:511px;width:2px;height:2px;background:#fff"></div>
<div style="left:912px;top:510px;width:2px;height:2px;background:#a0a0a0"></div>
<div style="left:916px;top:514px;width:2px;height:2px;background:#fff"></div>
<div style="left:915px;top:513px;width:2px;height:2px;background:#a0a0a0"></div>
<div style="left:919px;top:511px;width:2px;height:2px;background:#fff"></div>
<div style="left:918px;top:510px;width:2px;height:2px;background:#a0a0a0"></div>
<div style="left:922px;top:514px;width:2px;height:2px;background:#fff"></div>
<div style="left:921px;top:513px;width:2px;height:2px;background:#a0a0a0"></div>
<div style="left:925px;top:511px;width:2px;height:2px;background:#fff"></div>
<div style="left:924px;top:510px;width:2px;height:2px;background:#a0a0a0"></div>
<div style="left:928px;top:514px;width:2px;height:2px;background:#fff"></div>
<div style="left:927px;top:513px;width:2px;height:2px;background:#a0a0a0"></div>
<div style="left:931px;top:511px;width:2px;height:2px;background:#fff"></div>
<div style="left:930px;top:510px;width:2px;height:2px;background:#a0a0a0"></div>
<div style="left:934px;top:514px;width:2px;height:2px;background:#fff"></div>
<div style="left:933px;top:513px;width:2px;height:2px;background:#a0a0a0"></div>
<div style="left:937px;top:511px;width:2px;height:2px;background:#fff"></div>
<div style="left:936px;top:510px;width:2px;height:2px;background:#a0a0a0"></div>
<div style="left:940px;top:514px;width:2px;height:2px;background:#fff"></div>
<div style="left:939px;top:513px;width:2px;height:2px;background:#a0a0a0"></div>
<div style="left:943px;top:511px;width:2px;height:2px;background:#fff"></div>
<div style="left:942px;top:510px;width:2px;height:2px;background:#a0a0a0"></div>
<div style="left:946px;top:514px;width:2px;height:2px;background:#fff"></div>
<div style="left:945px;top:513px;width:2px;height:2px;background:#a0a0a0"></div>
<div style="left:949px;top:511px;width:2px;height:2px;background:#fff"></div>
<div style="left:948px;top:510px;width:2px;height:2px;background:#a0a0a0"></div>
<div style="left:952px;top:514px;width:2px;height:2px;background:#fff"></div>
<div style="left:951px;top:513px;width:2px;height:2px;background:#a0a0a0"></div>
<div style="left:382px;top:517px;width:51px;height:25px;background:#fff;border:1px solid #dcdcdc;border-bottom:none;box-sizing:border-box"></div>
<div style="left:432px;top:519px;width:54px;height:19px;background:#f0f0f0;border:1px solid #d9d9d9;box-sizing:border-box"></div>
<div style="left:485px;top:519px;width:92px;height:19px;background:#f0f0f0;border:1px solid #d9d9d9;box-sizing:border-box"></div>
<div style="left:576px;top:519px;width:45px;height:19px;background:#f0f0f0;border:1px solid #d9d9d9;box-sizing:border-box"></div>
<div style="left:433px;top:537px;width:832px;height:1px;background:#dcdcdc"></div>
<div style="left:383px;top:538px;width:882px;height:128px;background:#fff;border-right:1px solid #dcdcdc;border-bottom:1px solid #dcdcdc;box-sizing:border-box"></div>
<div style="left:386px;top:541px;width:877px;height:123px;background:#f0f0f0;border:1px solid #a0a0a0;border-top-color:#696969;border-left-color:#696969;box-sizing:border-box"></div>
<div style="left:388px;top:543px;width:874px;height:21px;background:#fff"></div>
<div style="left:406px;top:546px;width:17px;height:16px;border:1px solid #000;box-sizing:border-box"></div>
<div style="left:432px;top:559px;width:14px;height:1px;background:#0a8a0a"></div>
<div style="left:429px;top:566px;width:15px;height:16px;border:1px solid #000;box-sizing:border-box"></div>
<div style="left:453px;top:579px;width:21px;height:1px;background:#0a8a0a"></div>
<div style="left:444px;top:586px;width:24px;height:16px;border:1px solid #000;box-sizing:border-box"></div>
<div style="left:477px;top:599px;width:73px;height:1px;background:#0000ee"></div>
<div style="left:573px;top:599px;width:28px;height:1px;background:#0000ee"></div>
<div style="left:444px;top:606px;width:24px;height:16px;border:1px solid #000;box-sizing:border-box"></div>
<div style="left:477px;top:619px;width:73px;height:1px;background:#0000ee"></div>
<div style="left:573px;top:619px;width:22px;height:1px;background:#0000ee"></div>
<div style="left:429px;top:626px;width:15px;height:16px;border:1px solid #000;box-sizing:border-box"></div>
<div style="left:453px;top:639px;width:83px;height:1px;background:#0000ee"></div>
<div style="left:569px;top:639px;width:6px;height:1px;background:#0000ee"></div>
<div style="left:9px;top:681px;width:1270px;height:19px;background:#c8dbf8"></div>
<div style="left:9px;top:698px;width:1270px;height:1px;background:#8eaee4"></div>
<div style="left:1px;top:699px;width:1278px;height:20px;background:#c8dbf8"></div>
<div style="left:10px;top:681px;width:302px;height:17px;background:linear-gradient(180deg,#d9e7fc 0,#cfe0fa 40%,#b9d0f4 70%,#9dbbeb 100%);border:1px solid #8aa8dc;border-top-color:#86a6dd;box-sizing:border-box"></div>
<div style="left:314px;top:681px;width:82px;height:17px;background:linear-gradient(180deg,#d9e7fc 0,#cfe0fa 40%,#b9d0f4 70%,#9dbbeb 100%);border:1px solid #8aa8dc;border-top-color:#86a6dd;box-sizing:border-box"></div>
<div style="left:398px;top:681px;width:881px;height:17px;background:linear-gradient(180deg,#d9e7fc 0,#cfe0fa 40%,#b9d0f4 70%,#9dbbeb 100%);border:1px solid #8aa8dc;border-top-color:#86a6dd;box-sizing:border-box"></div>
<div style="left:2px;top:700px;width:302px;height:18px;background:linear-gradient(180deg,#d9e7fc 0,#cfe0fa 40%,#b9d0f4 70%,#9dbbeb 100%);border:1px solid #8aa8dc;border-top-color:#86a6dd;box-sizing:border-box"></div>
<div style="left:306px;top:700px;width:203px;height:18px;background:linear-gradient(180deg,#d9e7fc 0,#cfe0fa 40%,#b9d0f4 70%,#9dbbeb 100%);border:1px solid #8aa8dc;border-top-color:#86a6dd;box-sizing:border-box"></div>
<div style="left:511px;top:700px;width:768px;height:18px;background:linear-gradient(180deg,#d9e7fc 0,#cfe0fa 40%,#b9d0f4 70%,#9dbbeb 100%);border:1px solid #8aa8dc;border-top-color:#86a6dd;box-sizing:border-box"></div>
<div style="left:1275px;top:707px;width:2px;height:2px;background:#fff"></div>
<div style="left:1274px;top:706px;width:2px;height:2px;background:#1c2f7a"></div>
<div style="left:1271px;top:711px;width:2px;height:2px;background:#fff"></div>
<div style="left:1270px;top:710px;width:2px;height:2px;background:#1c2f7a"></div>
<div style="left:1275px;top:711px;width:2px;height:2px;background:#fff"></div>
<div style="left:1274px;top:710px;width:2px;height:2px;background:#1c2f7a"></div>
<div style="left:1267px;top:715px;width:2px;height:2px;background:#fff"></div>
<div style="left:1266px;top:714px;width:2px;height:2px;background:#1c2f7a"></div>
<div style="left:1271px;top:715px;width:2px;height:2px;background:#fff"></div>
<div style="left:1270px;top:714px;width:2px;height:2px;background:#1c2f7a"></div>
<div style="left:1275px;top:715px;width:2px;height:2px;background:#fff"></div>
<div style="left:1274px;top:714px;width:2px;height:2px;background:#1c2f7a"></div>
<div style="left:0px;top:0px;width:1280px;height:720px;border:1px solid #1985ab;box-sizing:border-box;pointer-events:none"></div>
<svg id="tx" width="1280" height="720" viewBox="0 0 1280 720">
<text x="29.5" y="20" font-size="12" textLength="86.6" lengthAdjust="spacingAndGlyphs" class="t">Firebird Maestro</text>
<text x="10.0" y="47" font-size="11.6" textLength="46.6" lengthAdjust="spacingAndGlyphs">Database</text>
<text x="72.0" y="47" font-size="11.6" textLength="19.1" lengthAdjust="spacingAndGlyphs">Edit</text>
<text x="106.5" y="47" font-size="11.6" textLength="22.1" lengthAdjust="spacingAndGlyphs">View</text>
<text x="144.0" y="47" font-size="11.6" textLength="33.1" lengthAdjust="spacingAndGlyphs">Object</text>
<text x="191.5" y="47" font-size="11.6" textLength="26.6" lengthAdjust="spacingAndGlyphs">Tools</text>
<text x="233.0" y="47" font-size="11.6" textLength="61.6" lengthAdjust="spacingAndGlyphs">Maintenance</text>
<text x="310.5" y="47" font-size="11.6" textLength="43.6" lengthAdjust="spacingAndGlyphs">Windows</text>
<text x="369.0" y="47" font-size="11.6" textLength="21.6" lengthAdjust="spacingAndGlyphs">Help</text>
<text x="34.2" y="100" font-size="13.5" fill="#fff" font-weight="bold" font-family="Liberation Serif,serif">1</text>
<text x="48.5" y="100" font-size="11.6" textLength="27.1" lengthAdjust="spacingAndGlyphs">Home</text>
<text x="107.5" y="100" font-size="11.6" textLength="71.6" lengthAdjust="spacingAndGlyphs">Visual Query...</text>
<text x="211.0" y="100" font-size="11.6" textLength="69.1" lengthAdjust="spacingAndGlyphs">SQL Editor: ...</text>
<text x="38.5" y="134" font-size="11.5" textLength="54.6" lengthAdjust="spacing" font-weight="bold">Database</text>
<text x="38.5" y="202" font-size="11.5" textLength="45.1" lengthAdjust="spacing" font-weight="bold">General</text>
<text x="38.5" y="409" font-size="11.5" textLength="26.1" lengthAdjust="spacingAndGlyphs" font-weight="bold">Files</text>
<text x="47.5" y="161" font-size="11.5" textLength="116.1" lengthAdjust="spacing" font-weight="bold">Music_Collection.fdb</text>
<text x="42.0" y="233" font-size="11.6" textLength="71.1" lengthAdjust="spacingAndGlyphs">Execute query</text>
<text x="42.0" y="255" font-size="11.6" textLength="105.6" lengthAdjust="spacingAndGlyphs">Add tables to diagram</text>
<text x="42.0" y="277" font-size="11.6" textLength="56.6" lengthAdjust="spacingAndGlyphs">Clear query</text>
<text x="42.0" y="299" font-size="11.6" textLength="73.1" lengthAdjust="spacingAndGlyphs">Show SQL Help</text>
<text x="42.0" y="321" font-size="11.6" textLength="115.6" lengthAdjust="spacingAndGlyphs">Configure Query Builder</text>
<text x="42.0" y="343" font-size="11.6" textLength="92.6" lengthAdjust="spacingAndGlyphs">Open new instance</text>
<text x="42.0" y="365" font-size="11.6" textLength="105.6" lengthAdjust="spacingAndGlyphs">Create view from SQL</text>
<text x="42.0" y="440" font-size="11.6" textLength="64.6" lengthAdjust="spacingAndGlyphs">Load diagram</text>
<text x="42.0" y="462" font-size="11.6" textLength="65.6" lengthAdjust="spacingAndGlyphs">Save diagram</text>
<text x="241.0" y="120" font-size="11.6" textLength="39.6" lengthAdjust="spacingAndGlyphs">Diagram</text>
<text x="314.0" y="122" font-size="11.6" textLength="28.6" lengthAdjust="spacingAndGlyphs">Editor</text>
<text x="375.5" y="122" font-size="11.6" textLength="30.6" lengthAdjust="spacingAndGlyphs">Result</text>
<text x="220.5" y="146.5" font-size="11.6" textLength="31.1" lengthAdjust="spacingAndGlyphs">Select</text>
<text x="259.5" y="167.5" font-size="11.6" textLength="40.1" lengthAdjust="spacingAndGlyphs">Query 1</text>
<text x="405.0" y="146.5" font-size="11.6" textLength="40.1" lengthAdjust="spacingAndGlyphs">Query 1</text>
<text x="423" y="195" font-size="11" textLength="46" lengthAdjust="spacingAndGlyphs" font-weight="bold">ARTISTS</text>
<text x="423" y="215" font-size="11" textLength="9" lengthAdjust="spacingAndGlyphs">ID</text>
<text x="423" y="232" font-size="11" textLength="28.8" lengthAdjust="spacingAndGlyphs">NAME</text>
<text x="423" y="249" font-size="11" textLength="49" lengthAdjust="spacingAndGlyphs">GENRE_ID</text>
<text x="423" y="266" font-size="11" textLength="65" lengthAdjust="spacingAndGlyphs">COUNTRY_ID</text>
<text x="423" y="283" font-size="11" textLength="63.8" lengthAdjust="spacingAndGlyphs">BIRTH_NAME</text>
<text x="423" y="300" font-size="11" textLength="64" lengthAdjust="spacingAndGlyphs">BIRTH_YEAR</text>
<text x="423" y="317" font-size="11" textLength="70.2" lengthAdjust="spacingAndGlyphs">BIRTH_MONTH</text>
<text x="423" y="334" font-size="11" textLength="56.5" lengthAdjust="spacingAndGlyphs">BIRTH_DAY</text>
<text x="423" y="351" font-size="11" textLength="99.5" lengthAdjust="spacingAndGlyphs">BIRTH_COUNTRY_ID</text>
<text x="423" y="368" font-size="11" textLength="67.5" lengthAdjust="spacingAndGlyphs">BIRTH_PLACE</text>
<text x="423" y="385" font-size="11" textLength="67.8" lengthAdjust="spacingAndGlyphs">DEATH_YEAR</text>
<text x="423" y="402" font-size="11" textLength="74" lengthAdjust="spacingAndGlyphs">DEATH_MONTH</text>
<text x="423" y="419" font-size="11" textLength="60.2" lengthAdjust="spacingAndGlyphs">DEATH_DAY</text>
<text x="423" y="436" font-size="11" textLength="104" lengthAdjust="spacingAndGlyphs">DEATH_COUNTRY_ID</text>
<text x="423" y="453" font-size="11" textLength="71.5" lengthAdjust="spacingAndGlyphs">DEATH_PLACE</text>
<text x="423" y="470" font-size="11" textLength="60.2" lengthAdjust="spacingAndGlyphs">BIOGRAPHY</text>
<text x="643" y="314" font-size="11" textLength="41" lengthAdjust="spacingAndGlyphs" font-weight="bold">GENRES</text>
<text x="643" y="334" font-size="11" textLength="9" lengthAdjust="spacingAndGlyphs">ID</text>
<text x="643" y="351" font-size="11" textLength="28.8" lengthAdjust="spacingAndGlyphs">NAME</text>
<text x="643" y="368" font-size="11" textLength="33.8" lengthAdjust="spacingAndGlyphs">NOTES</text>
<text x="643" y="385" font-size="11" textLength="62.8" lengthAdjust="spacingAndGlyphs">TIME_ADDED</text>
<text x="643" y="402" font-size="11" textLength="74" lengthAdjust="spacingAndGlyphs">TIME_MODIFIED</text>
<text x="843" y="178" font-size="11" textLength="44" lengthAdjust="spacingAndGlyphs" font-weight="bold">ALBUMS</text>
<text x="843" y="198" font-size="11" textLength="9" lengthAdjust="spacingAndGlyphs">ID</text>
<text x="843" y="215" font-size="11" textLength="50" lengthAdjust="spacingAndGlyphs">ARTIST_ID</text>
<text x="843" y="232" font-size="11" textLength="28.8" lengthAdjust="spacingAndGlyphs">NAME</text>
<text x="843" y="249" font-size="11" textLength="50" lengthAdjust="spacingAndGlyphs">COMMENT</text>
<text x="843" y="266" font-size="11" textLength="80.8" lengthAdjust="spacingAndGlyphs">RELEASE_YEAR</text>
<text x="843" y="283" font-size="11" textLength="87.5" lengthAdjust="spacingAndGlyphs">RELEASE_MONTH</text>
<text x="843" y="300" font-size="11" textLength="73.2" lengthAdjust="spacingAndGlyphs">RELEASE_DAY</text>
<text x="843" y="317" font-size="11" textLength="92.5" lengthAdjust="spacingAndGlyphs">RELEASE_DECADE</text>
<text x="843" y="334" font-size="11" textLength="49" lengthAdjust="spacingAndGlyphs">GENRE_ID</text>
<text x="843" y="351" font-size="11" textLength="47.8" lengthAdjust="spacingAndGlyphs">LABEL_ID</text>
<text x="843" y="368" font-size="11" textLength="46.2" lengthAdjust="spacingAndGlyphs">MEDIA_ID</text>
<text x="843" y="385" font-size="11" textLength="61.5" lengthAdjust="spacingAndGlyphs">MUST_HAVE</text>
<text x="843" y="402" font-size="11" textLength="37" lengthAdjust="spacingAndGlyphs">RATING</text>
<text x="843" y="419" font-size="11" textLength="38.8" lengthAdjust="spacingAndGlyphs">REVIEW</text>
<text x="843" y="436" font-size="11" textLength="87.8" lengthAdjust="spacingAndGlyphs">REVIEW_AUTHOR</text>
<text x="843" y="453" font-size="11" textLength="75.8" lengthAdjust="spacingAndGlyphs">COVER_FRONT</text>
<text x="843" y="470" font-size="11" textLength="71" lengthAdjust="spacingAndGlyphs" clip-path="url(#clipALBUMS)">COVER_BACK</text>
<clipPath id="clipALBUMS"><rect x="820" y="164" width="156" height="299"/></clipPath>
<text x="1121" y="331" font-size="11" textLength="42" lengthAdjust="spacingAndGlyphs" font-weight="bold">LABELS</text>
<text x="1121" y="351" font-size="11" textLength="9" lengthAdjust="spacingAndGlyphs">ID</text>
<text x="1121" y="368" font-size="11" textLength="28.5" lengthAdjust="spacingAndGlyphs">NAME</text>
<text x="1121" y="385" font-size="11" textLength="65" lengthAdjust="spacingAndGlyphs">COUNTRY_ID</text>
<text x="1121" y="402" font-size="11" textLength="29.5" lengthAdjust="spacingAndGlyphs">LOGO</text>
<text x="1121" y="419" font-size="11" textLength="47.8" lengthAdjust="spacingAndGlyphs">CONTACT</text>
<text x="1121" y="436" font-size="11" textLength="43.6" lengthAdjust="spacingAndGlyphs">WEBSITE</text>
<text x="436.0" y="532.5" font-size="11.6" textLength="44.1" lengthAdjust="spacingAndGlyphs">Selection</text>
<text x="490.5" y="532.5" font-size="11.6" textLength="80.1" lengthAdjust="spacingAndGlyphs">Grouping criteria</text>
<text x="581.5" y="532.5" font-size="11.6" textLength="35.1" lengthAdjust="spacingAndGlyphs">Sorting</text>
<text x="389.0" y="530.5" font-size="11.6" textLength="35.6" lengthAdjust="spacingAndGlyphs">Criteria</text>
<text x="409.5" y="558" font-size="11" textLength="10.1" lengthAdjust="spacing" fill="#1a0a6e">...</text>
<text x="431.5" y="558" font-size="11" textLength="15.1" lengthAdjust="spacing" fill="#0a8a0a" font-weight="bold">All</text>
<text x="449.0" y="558" font-size="11" textLength="96.6" lengthAdjust="spacing">of following are met</text>
<text x="433" y="578" font-size="11" textLength="8" lengthAdjust="spacingAndGlyphs" fill="#1a0a6e">1.</text>
<text x="452.5" y="578" font-size="11" textLength="22.1" lengthAdjust="spacing" fill="#0a8a0a" font-weight="bold">Any</text>
<text x="476.5" y="578" font-size="11" textLength="97.1" lengthAdjust="spacing">of following are met</text>
<text x="447.5" y="598" font-size="11" textLength="18.0" lengthAdjust="spacingAndGlyphs" fill="#1a0a6e">1.1.</text>
<text x="477" y="598" font-size="11" textLength="73" lengthAdjust="spacingAndGlyphs" fill="#0000ee">GENRES.NAME</text>
<text x="557" y="597.7" font-size="8.5" textLength="5.5" lengthAdjust="spacingAndGlyphs" fill="#f00" font-weight="bold">=</text>
<text x="572.5" y="598" font-size="11" textLength="29.1" lengthAdjust="spacingAndGlyphs" fill="#0000ee">'Rock'</text>
<text x="447.5" y="618" font-size="11" textLength="18.0" lengthAdjust="spacingAndGlyphs" fill="#1a0a6e">1.2.</text>
<text x="477" y="618" font-size="11" textLength="73" lengthAdjust="spacingAndGlyphs" fill="#0000ee">GENRES.NAME</text>
<text x="557" y="617.7" font-size="8.5" textLength="5.5" lengthAdjust="spacingAndGlyphs" fill="#f00" font-weight="bold">=</text>
<text x="572.5" y="618" font-size="11" textLength="23.1" lengthAdjust="spacingAndGlyphs" fill="#0000ee">'Pop'</text>
<text x="433" y="638" font-size="11" textLength="8" lengthAdjust="spacingAndGlyphs" fill="#1a0a6e">2.</text>
<text x="453" y="638" font-size="11" textLength="83" lengthAdjust="spacingAndGlyphs" fill="#0000ee">ALBUMS.RATING</text>
<text x="547" y="637.8" font-size="8.5" textLength="11.5" lengthAdjust="spacingAndGlyphs" fill="#f00" font-weight="bold">&gt;=</text>
<text x="568.5" y="638" font-size="11" textLength="7.1" lengthAdjust="spacing" fill="#0000ee">7</text>
<text x="11.5" y="693.5" font-size="11.6" textLength="152.1" lengthAdjust="spacingAndGlyphs">Database: Music_Collection.fdb</text>
<text x="326.0" y="693.5" font-size="11.6" textLength="15.6" lengthAdjust="spacingAndGlyphs">10:</text>
<text x="353.5" y="693.5" font-size="11.6" textLength="13.1" lengthAdjust="spacing">53</text>
<text x="3.5" y="712.5" font-size="11.6" textLength="152.1" lengthAdjust="spacingAndGlyphs">Database: Music_Collection.fdb</text>
</svg>
</div>
</body></html>
